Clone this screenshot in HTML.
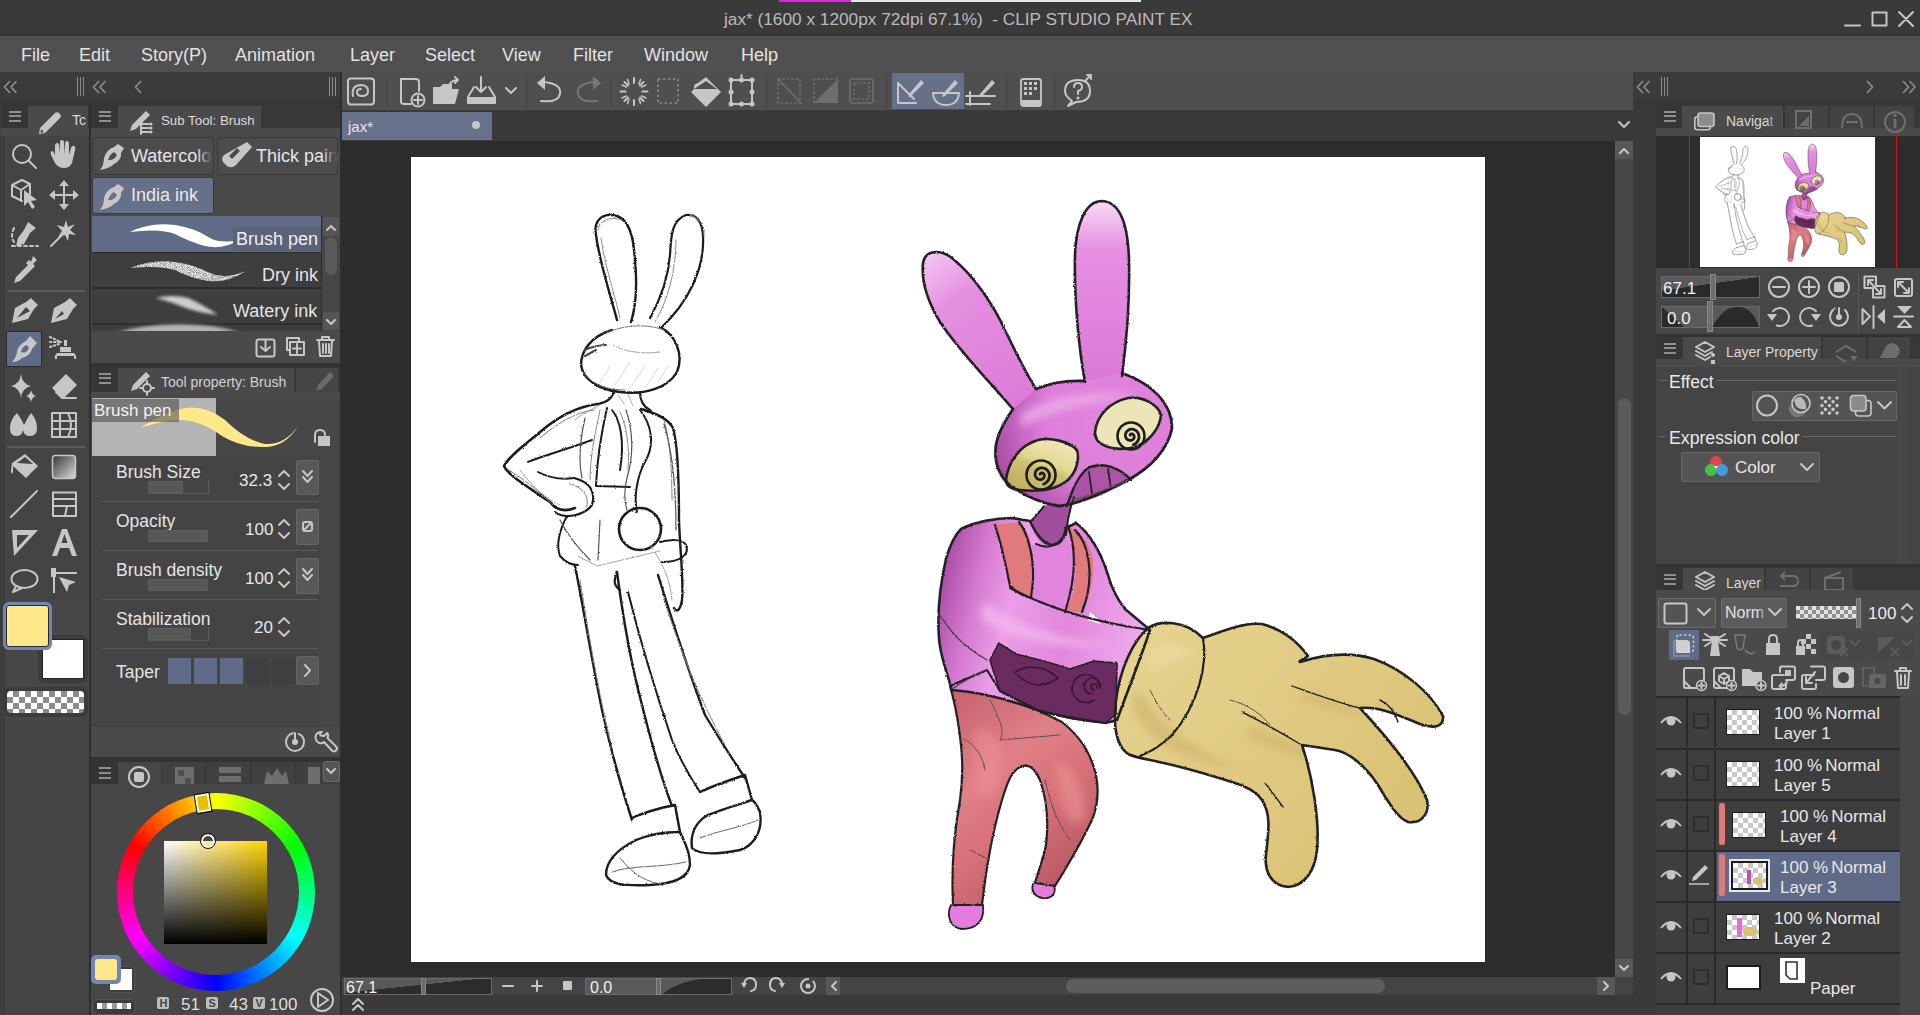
<!DOCTYPE html>
<html><head><meta charset="utf-8">
<style>
*{margin:0;padding:0;box-sizing:border-box}
html,body{width:1920px;height:1015px;overflow:hidden;background:#3a3a3a;font-family:"Liberation Sans",sans-serif;color:#dcdcdc}
.a{position:absolute}
.t{position:absolute;white-space:nowrap;line-height:1}
svg{position:absolute;overflow:visible}
.ic{fill:none;stroke:#c6c6c6;stroke-width:2;stroke-linecap:round;stroke-linejoin:round}
.icf{fill:#c6c6c6;stroke:none}
.hb{position:absolute;background:#363636}
.hb i{position:absolute;left:8px;width:12px;height:2px;background:#8e8e8e}
</style></head><body>

<!-- title bar -->
<div class="a" style="left:0;top:0;width:1920px;height:36px;background:#3a3a3a"></div>
<div class="a" style="left:779px;top:0;width:72px;height:2px;background:#d62ad6"></div>
<div class="a" style="left:851px;top:0;width:290px;height:2px;background:#e8e8e8"></div>
<div class="t" id="title" style="left:724px;top:11px;font-size:17.24px;color:#bababa">jax* (1600 x 1200px 72dpi 67.1%)&nbsp; - CLIP STUDIO PAINT EX</div>
<svg style="left:0;top:0" width="1920" height="36">
<path class="ic" stroke-width="1.6" d="M1845,25.5 H1860 M1872.5,12.5 H1886.5 V25.5 H1872.5 Z M1899,12 L1913,26 M1913,12 L1899,26"/>
</svg>
<div class="a" style="left:0;top:34px;width:1920px;height:2px;background:#353535"></div>
<!-- menu -->
<div class="a" style="left:0;top:36px;width:1920px;height:36px;background:#505050"></div>
<div id="menu">
<div class="t" style="left:21px;top:46px;font-size:18px;color:#e2e2e2">File</div>
<div class="t" style="left:79px;top:46px;font-size:18px;color:#e2e2e2">Edit</div>
<div class="t" style="left:141px;top:46px;font-size:18px;color:#e2e2e2">Story(P)</div>
<div class="t" style="left:235px;top:46px;font-size:18px;color:#e2e2e2">Animation</div>
<div class="t" style="left:350px;top:46px;font-size:18px;color:#e2e2e2">Layer</div>
<div class="t" style="left:425px;top:46px;font-size:18px;color:#e2e2e2">Select</div>
<div class="t" style="left:502px;top:46px;font-size:18px;color:#e2e2e2">View</div>
<div class="t" style="left:573px;top:46px;font-size:18px;color:#e2e2e2">Filter</div>
<div class="t" style="left:644px;top:46px;font-size:18px;color:#e2e2e2">Window</div>
<div class="t" style="left:741px;top:46px;font-size:18px;color:#e2e2e2">Help</div>
</div>
<!-- row under menu -->
<div class="a" style="left:0;top:72px;width:1920px;height:31px;background:#3b3b3b"></div>
<div class="a" style="left:0;top:100px;width:342px;height:4px;background:#363636"></div>
<div class="a" style="left:1633px;top:100px;width:287px;height:4px;background:#363636"></div>
<div class="a" style="left:342px;top:72px;width:1291px;height:38px;background:#4f4f4f"></div>

<!-- ===== LEFT: top row icons ===== -->
<svg style="left:0;top:72px" width="342" height="31">
<path fill="none" stroke="#8e8e8e" stroke-width="1.6" d="M10,9 L4.5,15 L10,21 M16.5,9 L11,15 L16.5,21 M99,9 L93.5,15 L99,21 M105.5,9 L100,15 L105.5,21 M141,9 L135.5,15 L141,21"/>
<path fill="none" stroke="#8a8a8a" stroke-width="1" d="M77.5,5 V24 M80.5,5 V24 M83.5,5 V24 M329.5,5 V24 M332.5,5 V24 M335.5,5 V24"/>
</svg>
<!-- ===== TOOL PANEL ===== -->
<div class="a" style="left:0;top:104px;width:89px;height:911px;background:#444"></div>
<div class="a" style="left:0;top:104px;width:89px;height:24px;background:#383838"></div>
<div class="hb" style="left:1px;top:104px;width:27px;height:24px"><i style="top:7px"></i><i style="top:11px"></i><i style="top:16px"></i></div>
<div class="a" style="left:28px;top:106px;width:60px;height:30px;background:#4a4a4a"></div>
<div class="a" style="left:1px;top:128px;width:88px;height:8px;background:#4a4a4a"></div>
<div class="a" style="left:89px;top:104px;width:2px;height:911px;background:#2f2f2f"></div>
<div class="a" style="left:0;top:136px;width:5px;height:879px;background:#3e3e3e"></div>
<svg style="left:0;top:0" width="90" height="1015">
 <path class="icf" d="M55,113 Q58,111 60,114 Q62,117 59,119 L45,133 L39,134 L40,128 Z"/>
 <path fill="#4a4a4a" d="M41,129 L44,132 L40.5,133 Z"/>
</svg>
<div class="t" style="left:72px;top:113px;font-size:14px;color:#d8d8d8">Tc</div>
<div class="a" style="left:7px;top:290px;width:78px;height:2px;background:#5e5e5e"></div>
<div class="a" style="left:7px;top:446px;width:78px;height:2px;background:#5e5e5e"></div>
<div class="a" style="left:6px;top:331px;width:36px;height:36px;background:#5f6b87;border:1px solid #2c2c2c"></div>
<svg style="left:0;top:0" width="90" height="1015">
 <!-- magnifier -->
 <circle class="ic" cx="22" cy="154" r="9"/><path class="ic" stroke-width="2.6" d="M29,161 L36,168"/>
 <!-- hand -->
 <path class="icf" d="M55,156 L55,146 Q55,143 57,143 Q59,143 59,146 L59,154 L60,143 Q60,140 62,140 Q64,140 64,143 L64,154 L65,144 Q65,141 67,141 Q69,141 69,144 L69,155 L71,148 Q72,145 74,146 Q76,147 75,150 L72,163 Q70,168 64,168 Q58,168 55,163 L51,155 Q50,152 52,151 Q54,151 55,156 Z"/>
 <!-- object -->
 <path class="ic" stroke-width="1.6" d="M12,185 L22,180 L30,184 L30,194 M12,185 L12,196 L22,201 M12,185 L21,190 L30,184 M21,190 L21,201"/>
 <path class="icf" d="M24,190 L24,206 L28,202 L32,209 L35,207 L31,201 L37,200 Z"/>
 <!-- move -->
 <path class="ic" stroke-width="1.8" d="M64,182 V208 M51,195 H77"/>
 <path class="icf" d="M64,180 L59,186 H69 Z M64,210 L59,204 H69 Z M49,195 L55,190 V200 Z M79,195 L73,190 V200 Z"/>
 <!-- selection pen -->
 <path class="icf" d="M28,222 L36,228 L30,233 L24,244 L16,246 L18,238 L24,230 Z"/>
 <path class="ic" stroke-width="1.6" stroke-dasharray="3,3" d="M14,228 Q10,236 14,242 M12,246 H38"/>
 <!-- magic wand -->
 <path class="icf" d="M66,220 L68,227 L75,224 L70,230 L76,235 L69,234 L68,241 L65,235 L58,237 L62,231 L57,225 L64,227 Z"/>
 <path class="ic" stroke-width="1.6" d="M62,235 L51,246"/>
 <!-- eyedropper -->
 <path class="icf" d="M33,256 L37,260 L33,264 L35,266 L32,269 L20,281 L14,283 L16,277 L28,265 L26,263 L29,260 L31,262 Z"/>
 <!-- pen nib -->
 <path class="icf" d="M31,298 L38,305 L34,309 L28,319 L12,323 L15,308 L26,302 Z"/>
 <path fill="#444" d="M17,318 L26,307 L30,311 Z"/>
 <!-- pencil marker -->
 <path class="icf" d="M70,298 L77,305 L73,309 L67,319 L51,323 L54,308 L65,302 Z"/>
 <path fill="#444" d="M55,319 L62,311 L64,314 Z"/>
 <!-- brush (selected) -->
 <path class="icf" d="M30,336 L37,343 L32,349 Q30,356 22,358 Q18,362 12,362 Q16,358 17,352 Q18,345 26,341 Z"/>
 <path fill="#5f6b87" d="M21,352 Q22,346 27,345 L29,348 Q26,354 21,352 Z"/>
 <!-- airbrush -->
 <path class="icf" d="M55,359 H76 Q77,356 74,353 H57 Q54,356 55,359 Z M60,352 H71 V347 H60 Z M64,346 H67 V340 H64 Z"/>
 <rect x="57" y="356" width="17" height="5" fill="#444"/>
 <path class="ic" stroke-width="1.6" stroke-dasharray="1.5,2.5" d="M50,337 L61,342 M50,342 H60 M50,347 L59,344"/>
 <!-- decoration sparkle -->
 <path class="icf" d="M21,374 Q22,384 31,386 Q22,388 21,398 Q20,388 11,386 Q20,384 21,374 Z M31,390 Q32,395 36,396 Q32,397 31,402 Q30,397 26,396 Q30,395 31,390 Z"/>
 <!-- eraser -->
 <path class="icf" d="M66,374 L77,385 L63,399 L52,388 Z"/>
 <path class="ic" stroke-width="1.6" d="M56,392 L62,398 H76"/>
 <!-- blend -->
 <path class="icf" d="M17,413 Q22,420 24,425 Q28,417 31,413 Q37,420 37,428 Q37,436 30,436 Q24,436 23,430 Q22,436 16,436 Q10,436 10,428 Q10,420 17,413 Z"/>
 <!-- perspective grid -->
 <path class="ic" stroke-width="1.6" d="M52,413 H76 V437 H52 Z M52,421 H76 M52,429 H76 M60,413 V437 M68,413 Q74,425 68,437"/>
 <!-- fill -->
 <path class="icf" d="M25,454 L38,466 L26,478 L13,466 L13,472 Q11,476 11,470 L12,463 Z"/>
 <path fill="#444" d="M17,463 L25,457 L33,464 Z"/>
 <!-- gradient -->
 <defs><linearGradient id="tg" x1="0" y1="0" x2="1" y2="1"><stop offset="0" stop-color="#333"/><stop offset="1" stop-color="#ddd"/></linearGradient></defs>
 <rect x="52.5" y="455.5" width="23" height="23" rx="3" fill="url(#tg)" stroke="#c6c6c6" stroke-width="1.5"/>
 <!-- line -->
 <path class="ic" stroke-width="1.6" d="M11,517 L37,491"/>
 <!-- frame -->
 <path class="ic" stroke-width="1.6" d="M53,492.5 H76 V516 H53 Z M53,499 H76 M53,506 H76 M67,506 L65,516"/>
 <!-- ruler -->
 <path class="icf" d="M12,530 H38 L14,556 Z"/>
 <path fill="#444" d="M17,535 H29 L17,548 Z"/>
 <!-- A -->
 <path class="icf" d="M62,529 H67 L77,556 H72 L69,548 H60 L57,556 H52 Z M61.5,543 H67.5 L64.5,534 Z"/>
 <!-- bubble -->
 <ellipse class="ic" stroke-width="1.6" cx="24.5" cy="579" rx="13" ry="9"/>
 <path class="ic" stroke-width="1.6" d="M16,586 L13,592 L22,588"/>
 <!-- correction -->
 <path class="icf" d="M51,568 H56 V572 H77 V574 H56 V577 H55 V593 H53 V577 H51 Z M59,577 L76,582 L69,585 L67,592 Z"/>
</svg>
<!-- color swatches -->
<div class="a" style="left:6px;top:600px;width:83px;height:120px;background:#474747"></div>
<div class="a" style="left:38px;top:635px;width:50px;height:48px;border-radius:6px;background:#3c3c3c"></div>
<div class="a" style="left:42px;top:639px;width:42px;height:40px;background:#fff;border:1px solid #222"></div>
<div class="a" style="left:3px;top:602px;width:49px;height:48px;border-radius:6px;background:#6f86b8"></div>
<div class="a" style="left:6px;top:605px;width:43px;height:42px;border-radius:3px;background:#ffe88a;border:1px solid #2a2a2a"></div>
<div class="a" style="left:3px;top:687px;width:85px;height:30px;border-radius:6px;background:#3c3c3c"></div>
<div class="a" style="left:7px;top:691px;width:77px;height:22px;border-radius:4px;background-color:#fff;background-image:linear-gradient(45deg,#8c8c8c 25%,transparent 25%,transparent 75%,#8c8c8c 75%),linear-gradient(45deg,#8c8c8c 25%,transparent 25%,transparent 75%,#8c8c8c 75%);background-size:12px 12px;background-position:0 0,6px 6px"></div>

<!-- ===== SUB TOOL PANEL ===== -->
<div class="a" style="left:91px;top:104px;width:249px;height:654px;background:#474747"></div>
<div class="a" style="left:91px;top:104px;width:249px;height:24px;background:#383838"></div>
<div class="hb" style="left:91px;top:104px;width:27px;height:24px"><i style="top:7px"></i><i style="top:11px"></i><i style="top:16px"></i></div>
<div class="a" style="left:118px;top:106px;width:143px;height:30px;background:#4a4a4a"></div>
<div class="a" style="left:91px;top:128px;width:249px;height:8px;background:#4a4a4a"></div>
<svg style="left:0;top:0" width="342" height="1015">
 <path class="icf" d="M146,111 L150,115 L136,129 L130,131 L132,125 Z"/>
 <path class="ic" stroke-width="1.5" d="M141,124 H149 M141,128 H149 M141,132 H149 M141,122 V134"/>
 <circle class="icf" cx="151" cy="124" r="1.5"/><circle class="icf" cx="151" cy="128" r="1.5"/><circle class="icf" cx="151" cy="132" r="1.5"/>
</svg>
<div class="t" style="left:161px;top:114px;font-size:13.3px;color:#dcdcdc">Sub Tool: Brush</div>
<div class="a" style="left:91px;top:136px;width:249px;height:80px;background:#4a4a4a"></div>
<div class="a" style="left:92px;top:137px;width:122px;height:38px;background:#4c4c4c;border:1px solid #3a3a3a;border-radius:3px"></div>
<div class="a" style="left:217px;top:137px;width:121px;height:38px;background:#4c4c4c;border:1px solid #3a3a3a;border-radius:3px"></div>
<div class="a" style="left:92px;top:177px;width:122px;height:37px;background:#667089;border:1px solid #3a3a3a;border-radius:3px"></div>
<svg style="left:0;top:0" width="342" height="1015">
 <path class="icf" d="M118,144 L124,148 L121,153 Q122,160 114,164 Q110,168 100,170 Q104,165 104,158 Q106,150 114,147 Z"/>
 <path fill="#4c4c4c" d="M108,160 Q110,154 114,152 L117,155 Q114,161 108,160 Z"/>
 <path class="icf" d="M247,142 L252,147 L236,165 Q232,169 227,166 L223,162 Q221,158 224,155 Z"/>
 <path fill="#4c4c4c" d="M229,156 L237,148 L240,151 L232,159 Z"/>
 <path class="icf" d="M118,184 L124,188 L121,193 Q122,200 114,204 Q110,208 100,210 Q104,205 104,198 Q106,190 114,187 Z"/>
 <path fill="#667089" d="M108,200 Q110,194 114,192 L117,195 Q114,201 108,200 Z"/>
</svg>
<div class="t" style="left:131px;top:147px;font-size:18px;color:#e4e4e4">Watercolo</div>
<div class="a" style="left:196px;top:140px;width:17px;height:32px;background:linear-gradient(90deg,rgba(76,76,76,0),#4c4c4c)"></div>
<div class="t" style="left:256px;top:147px;font-size:18px;color:#e4e4e4">Thick pain</div>
<div class="a" style="left:322px;top:140px;width:15px;height:32px;background:linear-gradient(90deg,rgba(76,76,76,0),#4c4c4c)"></div>
<div class="t" style="left:131px;top:186px;font-size:18px;color:#e8e8e8">India ink</div>
<!-- brush list -->
<div class="a" style="left:92px;top:216px;width:230px;height:115px;background:#2e2e2e"></div>
<div class="a" style="left:92px;top:216px;width:229px;height:36px;background:#5f6b87"></div>
<div class="a" style="left:92px;top:253px;width:229px;height:34px;background:#3e3e3e"></div>
<div class="a" style="left:92px;top:289px;width:229px;height:34px;background:#3e3e3e"></div>
<div class="a" style="left:92px;top:325px;width:229px;height:6px;background:#3e3e3e"></div>
<svg style="left:0;top:0" width="342" height="1015">
 <path fill="#fff" d="M130,232 Q150,222 175,225 Q195,228 210,238 Q220,244 240,240 Q222,250 205,246 Q190,242 175,234 Q160,228 130,232 Z"/>
 <defs><filter id="bl2" x="-30%" y="-100%" width="160%" height="300%"><feGaussianBlur stdDeviation="1.6"/></filter>
 <filter id="speck" x="-10%" y="-50%" width="120%" height="200%"><feTurbulence type="fractalNoise" baseFrequency="1.2" numOctaves="1" seed="7" result="n"/><feColorMatrix in="n" type="matrix" values="0 0 0 0 0  0 0 0 0 0  0 0 0 0 0  0 0 0 -1.6 1.55" result="m"/><feComposite in="SourceGraphic" in2="m" operator="in"/></filter></defs>
 <path fill="#f2f2f2" filter="url(#speck)" d="M130,268 Q152,259 175,262 Q195,265 210,273 Q225,280 246,271 Q228,283 208,281 Q190,278 175,270 Q158,265 130,268 Z"/>
 <path fill="#dddddd" opacity="0.9" filter="url(#bl2)" d="M156,298 Q172,294 188,298 Q202,304 218,315 Q200,313 186,308 Q172,302 156,298 Z"/>
 <path fill="#d0d0d0" opacity="0.8" filter="url(#bl2)" d="M115,333 Q150,322 200,325 Q225,327 240,333 Z"/>
</svg>
<div class="a" style="left:233px;top:227px;width:88px;height:24px;background:#5a6378"></div>
<div class="t" style="left:236px;top:230px;font-size:18px;color:#f0f0f0">Brush pen</div>
<div class="t" style="left:262px;top:266px;font-size:18px;color:#e4e4e4">Dry ink</div>
<div class="t" style="left:233px;top:302px;font-size:18px;color:#e4e4e4">Watery ink</div>
<!-- list scrollbar -->
<div class="a" style="left:322px;top:216px;width:18px;height:115px;background:#474747"></div>
<div class="a" style="left:323px;top:217px;width:16px;height:19px;background:#555;border-radius:2px"></div>
<div class="a" style="left:325px;top:237px;width:12px;height:38px;background:#5a5a5a;border-radius:6px"></div>
<div class="a" style="left:323px;top:312px;width:16px;height:18px;background:#555;border-radius:2px"></div>
<svg style="left:0;top:0" width="342" height="1015">
 <path class="ic" stroke-width="1.4" d="M327,230 L331,226 L335,230 M327,320 L331,324 L335,320"/>
</svg>
<!-- sub tool bottom bar -->
<div class="a" style="left:91px;top:331px;width:249px;height:32px;background:#4a4a4a"></div>
<svg style="left:0;top:0" width="342" height="1015">
 <rect class="ic" stroke-width="1.5" x="256.5" y="339.5" width="18" height="17" rx="2"/><path class="ic" stroke-width="1.5" d="M265.5,340 V351 M261,347 L265.5,351 L270,347"/>
 <path class="ic" stroke-width="1.5" d="M287,338 H299 V341 M287,338 V350 H290 M290,342 H304 V355 H290 Z M297,344 V353 M293,348.5 H301"/>
 <path class="ic" stroke-width="1.5" d="M317,340 H334 M322,340 V337 H329 V340 M319,341 L320,356 H331 L332,341 M323,344 V353 M326,344 V353 M329,344 V353"/>
</svg>
<!-- ===== TOOL PROPERTY ===== -->
<div class="a" style="left:91px;top:363px;width:249px;height:4px;background:#333"></div>
<div class="a" style="left:91px;top:367px;width:249px;height:25px;background:#383838"></div>
<div class="hb" style="left:91px;top:367px;width:27px;height:22px"><i style="top:6px"></i><i style="top:10px"></i><i style="top:15px"></i></div>
<div class="a" style="left:118px;top:368px;width:176px;height:30px;background:#4a4a4a"></div>
<div class="a" style="left:296px;top:368px;width:42px;height:24px;background:#454545"></div>
<div class="a" style="left:91px;top:392px;width:249px;height:6px;background:#4a4a4a"></div>
<svg style="left:0;top:0" width="342" height="1015">
 <path class="icf" d="M146,372 L150,376 L137,389 L131,391 L133,385 Z"/>
 <circle class="ic" stroke-width="1.8" cx="147" cy="388" r="4"/>
 <path class="ic" stroke-width="1.5" d="M147,381 V383 M147,393 V395 M140,388 H142 M152,388 H154"/>
 <path fill="#6a6a6a" d="M330,372 L334,376 L322,389 L316,391 L318,385 Z"/>
</svg>
<div class="t" style="left:161px;top:375px;font-size:14px;color:#d2d2d2">Tool property: Brush</div>
<!-- preview -->
<div class="a" style="left:92px;top:398px;width:248px;height:58px;background:#474747"></div>
<div class="a" style="left:92px;top:398px;width:124px;height:58px;background:#b4b4b4"></div>
<svg style="left:0;top:0" width="342" height="1015">
 <path fill="#ffe88a" d="M140,428 Q165,412 185,408 Q205,405 225,420 Q245,440 265,444 Q285,445 298,426 Q285,448 262,447 Q240,447 222,436 Q200,420 180,420 Q165,420 140,428 Z"/>
 <path class="ic" stroke-width="1.8" d="M315,442 V435 Q315,430 320,430 Q325,430 325,435"/>
 <rect x="318" y="436" width="12" height="10" class="icf"/>
</svg>
<div class="a" style="left:92px;top:399px;width:87px;height:23px;background:rgba(70,70,70,0.55)"></div>
<div class="t" style="left:94px;top:402px;font-size:17px;color:#f2f2f2">Brush pen</div>
<!-- property rows -->
<div class="a" style="left:91px;top:456px;width:249px;height:302px;background:#444"></div>
<div class="a" style="left:320px;top:456px;width:20px;height:270px;background:#474747"></div>
<div class="a" style="left:102px;top:501px;width:216px;height:1px;background:#5a5a5a"></div>
<div class="a" style="left:102px;top:550px;width:216px;height:1px;background:#5a5a5a"></div>
<div class="a" style="left:102px;top:599px;width:216px;height:1px;background:#5a5a5a"></div>
<div class="a" style="left:102px;top:648px;width:216px;height:1px;background:#5a5a5a"></div>
<div class="t" style="left:116px;top:464px;font-size:17.5px;color:#e4e4e4">Brush Size</div>
<div class="t" style="left:116px;top:513px;font-size:17.5px;color:#e4e4e4">Opacity</div>
<div class="t" style="left:116px;top:562px;font-size:17.5px;color:#e4e4e4">Brush density</div>
<div class="t" style="left:116px;top:611px;font-size:17.5px;color:#e4e4e4">Stabilization</div>
<div class="t" style="left:116px;top:664px;font-size:17.5px;color:#e4e4e4">Taper</div>
<div class="t" style="left:239px;top:472px;font-size:17px;color:#e8e8e8">32.3</div>
<div class="t" style="left:245px;top:521px;font-size:17px;color:#e8e8e8">100</div>
<div class="t" style="left:245px;top:570px;font-size:17px;color:#e8e8e8">100</div>
<div class="t" style="left:254px;top:619px;font-size:17px;color:#e8e8e8">20</div>
<!-- sliders -->
<div class="a" style="left:148px;top:480px;width:61px;height:14px;border-bottom:1px solid #5a5a5a;border-right:1px solid #5a5a5a"></div>
<div class="a" style="left:148px;top:481px;width:35px;height:12px;background:#575757;border:1px solid #5e5e5e"></div>
<div class="a" style="left:148px;top:530px;width:60px;height:12px;background:#575757;border:1px solid #5e5e5e"></div>
<div class="a" style="left:148px;top:579px;width:60px;height:12px;background:#575757;border:1px solid #5e5e5e"></div>
<div class="a" style="left:148px;top:627px;width:61px;height:14px;border-bottom:1px solid #5a5a5a;border-right:1px solid #5a5a5a"></div>
<div class="a" style="left:148px;top:628px;width:43px;height:12px;background:#575757;border:1px solid #5e5e5e"></div>
<!-- buttons -->
<div class="a" style="left:296px;top:460px;width:23px;height:35px;background:#585858;border:1px solid #666;border-radius:2px"></div>
<div class="a" style="left:296px;top:509px;width:23px;height:36px;background:#585858;border:1px solid #666;border-radius:2px"></div>
<div class="a" style="left:296px;top:558px;width:23px;height:36px;background:#585858;border:1px solid #666;border-radius:2px"></div>
<div class="a" style="left:296px;top:656px;width:23px;height:29px;background:#585858;border:1px solid #666;border-radius:2px"></div>
<svg style="left:0;top:0" width="342" height="1015">
 <path class="ic" stroke-width="1.4" d="M279,476 L284,471 L289,476 M279,484 L284,489 L289,484 M279,525 L284,520 L289,525 M279,533 L284,538 L289,533 M279,574 L284,569 L289,574 M279,582 L284,587 L289,582 M279,623 L284,618 L289,623 M279,631 L284,636 L289,631"/>
 <path class="ic" stroke-width="1.4" d="M303,471 L307.5,476 L312,471 M303,477 L307.5,482 L312,477 M303,569 L307.5,574 L312,569 M303,575 L307.5,580 L312,575"/>
 <rect class="ic" stroke-width="1.4" x="303" y="522" width="9" height="9" rx="2"/><path class="ic" stroke-width="1.2" d="M304,530 L311,523"/>
 <path class="ic" stroke-width="1.6" d="M305,665 L310,670.5 L305,676"/>
</svg>
<!-- taper -->
<div class="a" style="left:168px;top:658px;width:23px;height:26px;background:#5f6b87"></div>
<div class="a" style="left:194px;top:658px;width:23px;height:26px;background:#5f6b87"></div>
<div class="a" style="left:220px;top:658px;width:23px;height:26px;background:#5f6b87"></div>
<div class="a" style="left:246px;top:658px;width:23px;height:26px;background:#3f3f3f"></div>
<div class="a" style="left:272px;top:658px;width:23px;height:26px;background:#3f3f3f"></div>
<!-- tool property bottom bar -->
<div class="a" style="left:91px;top:727px;width:249px;height:30px;background:#4a4a4a"></div>
<svg style="left:0;top:0" width="342" height="1015">
 <circle class="ic" stroke-width="1.5" cx="295" cy="742" r="9" stroke-dasharray="40,6"/>
 <circle class="icf" cx="295" cy="742" r="3"/><path class="ic" stroke-width="1.5" d="M295,742 V733"/>
 <path class="ic" stroke-width="1.6" d="M322,732 Q316,732 315.5,737 Q315.5,741 319,743 Q322,744 324,742 L332,750.5 Q334,752.5 336,750.5 Q338,748.5 336,746.5 L327.5,738 Q329,735 327,733 L324,736 L320.5,735.5 L320,732.5 Z"/>
</svg>
<!-- ===== COLOR WHEEL PANEL ===== -->
<div class="a" style="left:91px;top:757px;width:249px;height:5px;background:#333"></div>
<div class="a" style="left:91px;top:762px;width:249px;height:253px;background:#474747"></div>
<div class="a" style="left:91px;top:762px;width:249px;height:22px;background:#3c3c3c"></div>
<div class="hb" style="left:91px;top:762px;width:27px;height:22px;background:#353535"><i style="top:5px"></i><i style="top:10px"></i><i style="top:15px"></i></div>
<div class="a" style="left:118px;top:762px;width:43px;height:22px;background:#474747"></div>
<div class="a" style="left:162px;top:762px;width:44px;height:22px;background:#404040;border-right:1px solid #363636"></div>
<div class="a" style="left:207px;top:762px;width:44px;height:22px;background:#404040;border-right:1px solid #363636"></div>
<div class="a" style="left:252px;top:762px;width:44px;height:22px;background:#404040;border-right:1px solid #363636"></div>
<div class="a" style="left:297px;top:762px;width:43px;height:22px;background:#404040"></div>
<div class="a" style="left:323px;top:761px;width:17px;height:21px;background:#555;border:1px solid #6a6a6a;border-radius:2px"></div>
<svg style="left:0;top:0" width="342" height="1015">
 <circle class="ic" stroke-width="1.6" cx="139" cy="777" r="10"/><rect class="icf" x="134" y="772" width="10" height="10" rx="2"/>
 <path fill="#6e6e6e" d="M175,767 H194 V784 H175 Z"/><path fill="#505050" d="M178,770 H184 V776 H178 Z M185,778 H191 V784 H185 Z"/>
 <path fill="#6e6e6e" d="M219,767 H241 V773 H219 Z M219,776 H241 V782 H219 Z"/>
 <path fill="#6e6e6e" d="M264,784 L267,771 L272,776 L277,768 L282,776 L286,771 L289,784 Z"/>
 <path fill="#6e6e6e" d="M308,767 H320 V784 H308 Z"/>
 <path class="ic" stroke-width="1.4" d="M327,769 L331,773 L335,769"/>
</svg>
<!-- wheel -->
<div class="a" style="left:117px;top:793px;width:198px;height:198px;border-radius:50%;background:conic-gradient(from 0deg,hsl(60,100%,50%),hsl(120,100%,50%) 60deg,hsl(180,100%,50%) 120deg,hsl(240,100%,50%) 180deg,hsl(300,100%,50%) 240deg,hsl(360,100%,50%) 300deg,hsl(420,100%,50%) 360deg)"></div>
<div class="a" style="left:133px;top:809px;width:166px;height:166px;border-radius:50%;background:#474747"></div>
<div class="a" style="left:164px;top:841px;width:103px;height:103px;background:linear-gradient(to bottom,rgba(0,0,0,0),#000),linear-gradient(to right,#fff,#ffd400)"></div>
<div class="a" style="left:196px;top:794px;width:14px;height:18px;background:#e8c000;border:2px solid #fff;outline:1px solid #111;transform:rotate(-9deg)"></div>
<div class="a" style="left:201px;top:834px;width:14px;height:14px;border-radius:50%;border:2px solid #fff;outline:1px solid #111"></div>
<!-- mini swatches -->
<div class="a" style="left:107px;top:966px;width:28px;height:27px;border-radius:5px;background:#3c3c3c;border:1px solid #555"></div>
<div class="a" style="left:110px;top:969px;width:22px;height:21px;background:#fff"></div>
<div class="a" style="left:91px;top:955px;width:30px;height:29px;border-radius:5px;background:#6f86b8"></div>
<div class="a" style="left:95px;top:959px;width:22px;height:21px;border-radius:3px;background:#ffe88a"></div>
<div class="a" style="left:92px;top:999px;width:44px;height:16px;border-radius:6px;background:#3c3c3c;border:1px solid #555"></div>
<div class="a" style="left:97px;top:1003px;width:34px;height:6px;background:repeating-linear-gradient(90deg,#fff 0 5px,#999 5px 10px)"></div>
<div class="t" style="left:181px;top:996px;font-size:17px;color:#dedede">51</div>
<div class="t" style="left:229px;top:996px;font-size:17px;color:#dedede">43</div>
<div class="t" style="left:269px;top:996px;font-size:17px;color:#dedede">100</div>
<div class="a" style="left:157px;top:997px;width:12px;height:12px;border-radius:2px;background:#bdbdbd"></div>
<div class="a" style="left:206px;top:997px;width:12px;height:12px;border-radius:2px;background:#bdbdbd"></div>
<div class="a" style="left:253px;top:997px;width:12px;height:12px;border-radius:2px;background:#bdbdbd"></div>
<div class="t" style="left:159.5px;top:998px;font-size:11px;font-weight:bold;color:#474747">H</div>
<div class="t" style="left:208.5px;top:998px;font-size:11px;font-weight:bold;color:#474747">S</div>
<div class="t" style="left:255.5px;top:998px;font-size:11px;font-weight:bold;color:#474747">V</div>
<svg style="left:0;top:0" width="342" height="1015">
 <circle class="ic" stroke-width="1.6" cx="322" cy="1000" r="11"/><path class="ic" stroke-width="1.6" d="M318,993 L328,1000 L318,1007 Z"/>
</svg>
<div class="a" style="left:340px;top:72px;width:2px;height:943px;background:#2f2f2f"></div>

<!-- ===== CANVAS TOOLBAR ===== -->
<div class="a" style="left:386px;top:76px;width:1px;height:32px;background:#3f3f3f"></div>
<div class="a" style="left:526px;top:76px;width:1px;height:32px;background:#3f3f3f"></div>
<div class="a" style="left:610px;top:76px;width:1px;height:32px;background:#3f3f3f"></div>
<div class="a" style="left:766px;top:76px;width:1px;height:32px;background:#3f3f3f"></div>
<div class="a" style="left:886px;top:76px;width:1px;height:32px;background:#3f3f3f"></div>
<div class="a" style="left:1006px;top:76px;width:1px;height:32px;background:#3f3f3f"></div>
<div class="a" style="left:1054px;top:76px;width:1px;height:32px;background:#3f3f3f"></div>
<div class="a" style="left:892px;top:73px;width:72px;height:36px;background:#667089"></div>
<svg style="left:0;top:0" width="1920" height="120">
 <g class="ic" stroke-width="1.8">
  <rect x="348" y="78.5" width="26" height="26" rx="3"/>
  <path d="M353,96 Q351,86 360,85 Q368,85 368,91 Q368,96 362,96 Q357,96 357,92 Q357,89 361,89"/>
  <path d="M401,79 H416 Q419,79 419,82 V91 M401,79 V102 Q401,104 405,104 H411"/>
  <circle cx="418" cy="100" r="6.5"/><path d="M414,100 H422 M418,96 V104"/>
  <path d="M474,87 L468,97 V103 H495 V97 L489,87"/>
  <path d="M481,77 V92 M476,87 L481,92 L486,87"/>
  <path d="M506,88 L511,93 L516,88"/>
  <path d="M544,82 Q562,84 560,94 Q558,103 541,101"/>
  <path d="M594,82 Q576,84 578,94 Q580,103 597,101" stroke="#777"/>
 </g>
 <path class="icf" d="M433,87 H440 L443,84 H452 V89 H459 L455,104 H433 Z"/>
 <path class="ic" stroke-width="1.6" d="M448,88 Q450,80 458,80 M455,77 L458,80 L455,83"/>
 <path class="icf" d="M468,97 H495 V103 H468 Z"/>
 <path class="icf" d="M537,83 L545,76 V90 Z"/>
 <path fill="#777" d="M601,83 L593,76 V90 Z"/>
 <!-- spinner -->
 <g class="ic" stroke-width="2">
  <path d="M634,78 V83 M634,100 V105 M620.5,91.5 H625.5 M642.5,91.5 H647.5 M624.5,82 L628,85.5 M640,97.5 L643.5,101 M643.5,82 L640,85.5 M628,97.5 L624.5,101"/>
  <path d="M627.5,79.5 L629,84 M639,99 L640.5,103.5 M622,85 L626.5,87 M641.5,96 L646,98 M646,85 L641.5,87 M626.5,96 L622,98 M640.5,79.5 L639,84 M629,99 L627.5,103.5" stroke-width="1.5"/>
 </g>
 <g fill="none" stroke="#8a8a8a" stroke-width="1.6" stroke-dasharray="2.5,2.5">
  <rect x="658" y="79" width="20" height="24"/>
 </g>
 <path class="icf" d="M706,77 L721,92 L706,107 L691,92 L694,89 Q693,84 698,83 Z"/>
 <path fill="#4f4f4f" d="M694,89 L706,81 L717,89 Z"/>
 <g class="ic" stroke-width="1.6"><rect x="731" y="80" width="21" height="24"/></g>
 <g class="icf"><circle cx="731" cy="80" r="2.5"/><circle cx="752" cy="80" r="2.5"/><circle cx="731" cy="104" r="2.5"/><circle cx="752" cy="104" r="2.5"/><circle cx="741.5" cy="104" r="2.5"/><circle cx="731" cy="92" r="2.5"/><circle cx="752" cy="92" r="2.5"/><circle cx="741.5" cy="80" r="2.5"/></g>
 <path class="ic" stroke-width="1.6" d="M741.5,80 V75"/>
 <!-- dim icons -->
 <g fill="none" stroke="#6e6e6e" stroke-width="1.6">
  <path stroke-dasharray="2.5,2" d="M778,79 H800 V103 H778 Z"/>
  <path d="M778,79 L802,104"/>
  <path stroke-dasharray="2.5,2" d="M814,103 V79 L838,79"/>
  <rect x="850" y="79" width="23" height="24" rx="2"/>
  <path stroke-dasharray="2.5,2" d="M854,83 H869 V99 H854 Z"/>
 </g>
 <path fill="#6e6e6e" d="M838,79 V103 H814 Z"/>
 <!-- ruler snap icons -->
 <g class="ic" stroke-width="1.8">
  <path d="M898,83 V103 H916"/><path d="M898,83 L914,99"/>
  <path d="M933,93 H959 Q958,105 946,105 Q934,105 933,93"/>
  <path d="M970,92 V105 M966,96 H995 M966,104 H990"/>
 </g>
 <path class="icf" d="M921,80 L924,83 L911,96 L908,97 L909,94 Z M955,80 L958,83 L945,96 L942,97 L943,94 Z M992,80 L995,83 L982,96 L979,97 L980,94 Z"/>
 <!-- device -->
 <rect x="1021" y="79" width="20" height="27" rx="2.5" fill="none" stroke="#c6c6c6" stroke-width="1.8"/>
 <rect x="1022" y="100" width="18" height="5" fill="#c6c6c6"/>
 <g class="icf"><rect x="1024" y="82" width="3" height="3"/><rect x="1029" y="82" width="3" height="3"/><rect x="1034" y="82" width="3" height="3"/><rect x="1024" y="87" width="3" height="3"/><rect x="1029" y="87" width="3" height="3"/><rect x="1034" y="87" width="3" height="3"/><rect x="1024" y="92" width="3" height="3"/><rect x="1029" y="92" width="3" height="3"/></g>
 <!-- help -->
 <path class="ic" stroke-width="1.8" d="M1072,101 Q1065,96 1065,91 Q1065,80 1078,80 Q1090,80 1090,91 Q1090,102 1076,102 L1068,106 Z"/>
 <path class="ic" stroke-width="1.8" d="M1085,81 L1091,75 M1087,75 H1091 V79"/>
 <path class="ic" stroke-width="2" d="M1074,87 Q1074,83 1078,83 Q1082,83 1082,87 Q1082,90 1078,91 V94"/>
 <circle class="icf" cx="1078" cy="98" r="1.5"/>
</svg>
<!-- ===== CANVAS AREA ===== -->
<div class="a" style="left:342px;top:110px;width:1291px;height:31px;background:#3a3a3a"></div>
<div class="a" style="left:342px;top:112px;width:150px;height:28px;background:#677189"></div>
<div class="t" style="left:348px;top:119px;font-size:15px;color:#e6e6e6">jax*</div>
<div class="a" style="left:472px;top:121px;width:8px;height:8px;border-radius:50%;background:#c8c8c8"></div>
<svg style="left:0;top:0" width="1920" height="200"><path class="ic" stroke-width="1.5" d="M1619,122 L1624,127 L1629,122"/></svg>
<div class="a" style="left:342px;top:141px;width:1273px;height:836px;background:#2c2c2c"></div>
<div class="a" style="left:411px;top:157px;width:1074px;height:805px;background:#fff"></div>
<div class="a" style="left:1615px;top:141px;width:18px;height:836px;background:#474747"></div>
<div class="a" style="left:1615px;top:141px;width:18px;height:18px;background:#585858"></div>
<div class="a" style="left:1615px;top:959px;width:18px;height:18px;background:#585858"></div>
<div class="a" style="left:1618px;top:398px;width:13px;height:317px;border-radius:7px;background:#5a5a5a"></div>
<div class="a" style="left:342px;top:977px;width:1291px;height:18px;background:#444"></div>
<div class="a" style="left:1597px;top:977px;width:18px;height:18px;background:#585858"></div>
<div class="a" style="left:826px;top:977px;width:14px;height:18px;background:#585858"></div>
<div class="a" style="left:1066px;top:979px;width:319px;height:14px;border-radius:7px;background:#5d5d5d"></div>
<div class="a" style="left:342px;top:995px;width:1291px;height:20px;background:#3a3a3a"></div>
<svg style="left:0;top:0" width="1920" height="1015">
 <path class="ic" stroke-width="1.4" d="M1620,153 L1624,149 L1628,153 M1620,966 L1624,970 L1628,966 M1604,982 L1608,986 L1604,990 M836,982 L832,986 L836,990"/>
 <path class="ic" stroke-width="1.5" d="M353,1004 L358,999 L363,1004 M353,1010 L358,1005 L363,1010"/>
</svg>
<!-- zoom controls -->
<div class="a" style="left:344px;top:978px;width:148px;height:17px;background:linear-gradient(174deg,#5a5a5a 0,#5a5a5a 45%,#2c2c2c 46%);border:1px solid #6a6a6a"></div>
<div class="a" style="left:421px;top:978px;width:5px;height:17px;background:#6a6a6a;border:1px solid #888"></div>
<div class="t" style="left:346px;top:980px;font-size:16px;color:#f0f0f0">67.1</div>
<div class="a" style="left:585px;top:978px;width:147px;height:17px;background:#5a5a5a;border:1px solid #6a6a6a;overflow:hidden"><div style="position:absolute;left:72px;top:-2px;width:150px;height:60px;border-radius:45%;background:#2c2c2c"></div></div>
<div class="a" style="left:656px;top:978px;width:5px;height:17px;background:#6a6a6a;border:1px solid #888"></div>
<div class="t" style="left:590px;top:980px;font-size:16px;color:#f0f0f0">0.0</div>
<svg style="left:0;top:0" width="1920" height="1015">
 <g class="ic" stroke-width="1.6">
 <path d="M503,986 H513 M532,986 H542 M537,981 V991"/>
 <path d="M744,984 Q745,978 750,978 Q756,978 756,985 Q756,990 751,991"/>
 <path d="M782,984 Q781,978 776,978 Q770,978 770,985 Q770,990 775,991"/>
 <circle cx="808" cy="986" r="7" stroke-dasharray="33,6"/>
 </g>
 <rect class="icf" x="563" y="981" width="9" height="9" rx="1"/>
 <path class="icf" d="M741,983 L747,983 L744,988 Z M779,983 L785,983 L782,988 Z"/>
 <circle class="icf" cx="808" cy="986" r="2.5"/>
</svg>

<svg style="left:0;top:0" width="1920" height="1015" viewBox="0 0 1920 1015">
<defs>
<filter id="rough" x="-2%" y="-2%" width="104%" height="104%"><feTurbulence type="fractalNoise" baseFrequency="0.9" numOctaves="2" seed="4"/><feDisplacementMap in="SourceGraphic" scale="2.2" xChannelSelector="R" yChannelSelector="G"/></filter>
<filter id="blur3" x="-20%" y="-20%" width="140%" height="140%"><feGaussianBlur stdDeviation="4"/></filter>
<filter id="blur6" x="-30%" y="-30%" width="160%" height="160%"><feGaussianBlur stdDeviation="7"/></filter>
<linearGradient id="earL" gradientUnits="userSpaceOnUse" x1="925" y1="255" x2="1030" y2="400"><stop offset="0" stop-color="#f4c8f2"/><stop offset="0.3" stop-color="#e490e0"/><stop offset="1" stop-color="#dc7ad8"/></linearGradient>
<linearGradient id="earR" gradientUnits="userSpaceOnUse" x1="1100" y1="205" x2="1100" y2="380"><stop offset="0" stop-color="#f8d4f5"/><stop offset="0.25" stop-color="#e590e2"/><stop offset="1" stop-color="#dc78d8"/></linearGradient>
<radialGradient id="headG" gradientUnits="userSpaceOnUse" cx="1110" cy="420" r="120"><stop offset="0" stop-color="#e286de"/><stop offset="0.55" stop-color="#de7eda"/><stop offset="1" stop-color="#a84ca4"/></radialGradient>
<linearGradient id="bodyG" gradientUnits="userSpaceOnUse" x1="940" y1="600" x2="1150" y2="650"><stop offset="0" stop-color="#b052ac"/><stop offset="0.15" stop-color="#d47ad0"/><stop offset="0.32" stop-color="#ec9ee8"/><stop offset="0.6" stop-color="#e286de"/><stop offset="1" stop-color="#f0b0ec"/></linearGradient>
<linearGradient id="pantsG" gradientUnits="userSpaceOnUse" x1="950" y1="700" x2="1095" y2="880"><stop offset="0" stop-color="#c86470"/><stop offset="0.35" stop-color="#e08088"/><stop offset="0.6" stop-color="#d87078"/><stop offset="1" stop-color="#b0545e"/></linearGradient>
<linearGradient id="gloveG" gradientUnits="userSpaceOnUse" x1="1150" y1="630" x2="1420" y2="850"><stop offset="0" stop-color="#e6d28e"/><stop offset="0.5" stop-color="#e0ca82"/><stop offset="1" stop-color="#d8c070"/></linearGradient>
<linearGradient id="eyeL" gradientUnits="userSpaceOnUse" x1="1050" y1="440" x2="1030" y2="492"><stop offset="0" stop-color="#ede6b0"/><stop offset="0.4" stop-color="#e2d894"/><stop offset="0.55" stop-color="#cdc072"/><stop offset="1" stop-color="#c0b060"/></linearGradient>
<path id="pEarL" d="M1045,425 L1012,408 C990,382 960,352 940,322 C928,302 921,282 923,263 C925,250 940,249 952,258 C972,274 992,302 1005,330 C1017,355 1027,375 1036,389 L1050,410 Z"/>
<path id="pEarR" d="M1085,382 C1079,350 1074,300 1075,255 C1076,225 1085,202 1101,201 C1120,201 1128,225 1129,260 C1130,300 1126,345 1122,376 L1110,400 L1090,400 Z"/>
<path id="pHead" d="M1013,409 C1002,425 995,440 995.5,452 C995,468 1003,480 1011,486 C1022,494 1040,503 1059,506 C1080,504 1105,492 1128,480 C1150,468 1168,450 1172,428 C1172,405 1155,385 1122,373 L1084,381 C1065,380 1048,384 1036,389 Z"/>
<path id="pEyeL" d="M1006,480 C1008,462 1020,445 1038,440 C1052,437 1070,442 1077,450 C1080,460 1076,472 1068,480 C1056,490 1038,492 1020,490 C1010,489 1006,485 1006,480 Z"/>
<path id="pEyeR" d="M1095,432 C1097,415 1110,402 1128,398 C1142,396 1158,404 1161,415 C1160,428 1150,440 1138,446 C1125,451 1108,449 1100,443 C1096,440 1095,436 1095,432 Z"/>
<path id="pBody" d="M961,529 C975,522 995,518 1012,518 L1030,521 C1035,532 1042,544 1053,545 C1060,544 1064,540 1066,528 L1076,523 C1088,532 1100,550 1108,575 C1112,590 1118,600 1125,609 L1150,630 C1140,660 1128,690 1117,720 L1106,723 C1080,720 1050,714 1037,710 C1010,700 980,692 952,690 C946,670 940,655 939,638 C937,610 940,585 946,559 C950,545 955,535 961,529 Z"/>
<path id="pPants" d="M950,686 C954,700 957,715 959,729 C962,750 964,770 960,800 C955,830 951,860 953,905 L982,905 C986,870 993,830 1002,800 C1008,780 1012,770 1022,766 C1030,764 1036,770 1040,780 C1047,800 1049,820 1046,845 C1043,860 1038,872 1035,883 L1055,886 C1065,870 1080,845 1092,820 C1098,805 1099,790 1096,775 C1090,750 1078,735 1062,722 L1037,710 L1000,691 L987,670 Z"/>
<path id="pGlove" d="M1148,628 C1160,620 1185,620 1203,638 C1225,630 1245,622 1262,624 C1285,630 1300,645 1308,656 C1303,660 1298,661 1300,662 C1322,655 1348,651 1374,659 C1404,670 1430,692 1443,716 C1444,727 1434,729 1420,724 C1400,716 1380,706 1360,708 C1385,735 1415,770 1427,800 C1430,815 1420,824 1408,822 C1398,818 1390,805 1378,785 C1365,765 1348,752 1335,750 L1302,745 C1312,775 1320,820 1317,850 C1315,870 1305,886 1288,887 C1272,886 1264,872 1266,855 C1268,835 1272,815 1262,800 C1255,790 1245,786 1235,783 C1210,775 1175,765 1150,760 C1140,758 1132,756 1128,754 C1116,745 1113,725 1116,700 C1120,670 1132,642 1148,628 Z"/>
<path id="pBelt" d="M998.6,643 L990,660 L993,670 L1000,691 L1037,710 L1051,714 L1073,719 L1106,723 L1116,714 L1117,663 L1094,661 L1070,669 L1044,661 L1016,654 Z"/>
<clipPath id="cGlove"><use href="#pGlove"/></clipPath>
<clipPath id="cPants"><use href="#pPants"/></clipPath>
<clipPath id="cHead"><use href="#pHead"/></clipPath>
<clipPath id="cBody"><use href="#pBody"/></clipPath>
</defs>
<g id="drawingG">
<!-- ===== LEFT SKETCH ===== -->
<g fill="none" stroke="#1c1c1c" stroke-linecap="round" stroke-linejoin="round" filter="url(#rough)">
 <!-- ears -->
 <path stroke-width="2.4" d="M617,320 C612,300 600,265 596,235 C593,220 603,214 612,215 C625,216 632,228 634,250 C637,275 638,300 631,322"/>
 <path stroke-width="1" stroke="#8a8a8a" d="M620,318 C616,300 604,262 601,238 M598,230 C600,220 610,216 622,220"/>
 <path stroke-width="2.2" d="M650,318 C660,300 668,280 670,255 C671,235 672,220 686,215 C700,213 704,228 703,245 C702,270 690,300 662,327"/>
 <path stroke-width="1" stroke="#8a8a8a" d="M655,322 C668,300 676,270 676,240 M690,215 C700,218 705,226 704,236"/>
 <!-- head -->
 <path stroke-width="2.4" d="M612,330 C592,336 581,350 581,365 C583,380 600,390 620,392 C645,395 668,388 677,372 C684,355 676,335 660,327"/>
 <path stroke-width="1" stroke="#777" d="M606,333 C626,324 648,324 664,330 M583,372 C590,383 605,390 625,390"/>
 <path stroke-width="2" stroke="#444" d="M584,350 C592,347 600,345 606,345 M585,356 L596,350"/>
 <path stroke-width="0.7" stroke="#c4c4c4" d="M615,385 L630,362 M630,388 L645,366 M645,388 L658,368 M658,382 L668,366 M600,383 L610,366"/>
 <!-- neck -->
 <path stroke-width="2.2" d="M614,390 C613,398 608,402 598,404 M640,392 C640,400 642,406 650,410"/>
 <path stroke-width="0.8" stroke="#999" d="M618,395 L625,405 M628,394 L633,406"/>
 <!-- torso / arm -->
 <path stroke-width="2.6" d="M598,404 C580,406 560,415 540,432 C525,445 510,455 504,466 C508,475 525,485 550,502 C556,510 565,512 575,508"/>
 <path stroke-width="1" stroke="#777" d="M594,410 C576,412 556,424 540,438 M509,470 C525,480 540,492 553,505"/>
 <path stroke-width="1.9" d="M528,462 C545,455 565,450 592,440 M538,472 C550,478 562,480 574,478"/>
 <path stroke-width="2.2" d="M574,478 C590,482 596,492 592,505 C585,515 565,520 555,512"/>
 <path stroke-width="1" stroke="#777" d="M570,484 C585,488 590,498 586,508"/>
 <path stroke-width="2" d="M566,518 C560,530 556,545 560,556 C565,562 572,565 578,565"/>
 <path stroke-width="2" d="M607,408 C602,430 597,460 596,486 L630,487 M612,410 C620,420 625,440 620,470"/>
 <path stroke-width="1" stroke="#888" d="M620,412 C626,425 630,445 628,470 M600,410 C596,430 590,455 590,480"/>
 <path stroke-width="2" d="M640,410 C652,425 655,445 645,462 C636,478 634,500 637,512"/>
 <path stroke-width="2.4" d="M641,409 C655,413 668,418 673,428 C678,445 679,480 679,520 C680,550 684,585 682,600 C680,612 676,612 674,608"/>
 <path stroke-width="1" stroke="#888" d="M664,420 C670,440 672,470 672,500"/>
 <path stroke-width="2" d="M660,542 C670,540 682,538 686,545 C690,555 680,562 662,562"/>
 <circle cx="640" cy="529" r="21" stroke-width="2.6"/>
 <path stroke-width="0.9" stroke="#999" d="M578,556 L597,566 L660,551"/>
 <path stroke-width="1.2" stroke="#555" d="M626,410 C633,430 634,455 627,478 C624,490 624,500 627,510 M585,418 C580,440 578,460 582,478 M664,424 C672,450 676,490 676,530 M560,520 C565,530 575,545 590,560 M600,520 L598,560"/>
 <path stroke-width="0.9" stroke="#999" d="M520,470 C535,490 548,500 560,505 M600,405 C590,410 580,415 575,420 M650,545 C660,560 670,575 672,600 M613,345 C620,350 640,355 660,352"/>
 <!-- legs -->
 <path stroke-width="2.4" d="M575,566 C582,600 590,650 602,710 C612,755 622,790 632,820"/>
 <path stroke-width="1" stroke="#888" d="M580,580 C588,630 598,690 610,740"/>
 <path stroke-width="2.4" d="M617,572 C622,610 630,660 642,705 C652,745 662,780 672,806"/>
 <path stroke-width="2.2" d="M617,572 C614,580 613,585 620,590"/>
 <path stroke-width="2.4" d="M658,575 C672,620 688,670 705,715 C720,740 733,760 745,778"/>
 <path stroke-width="1" stroke="#888" d="M664,600 C680,650 700,700 725,745"/>
 <path stroke-width="2" d="M628,592 C640,640 655,690 672,740 C682,765 692,780 700,792"/>
 <!-- shoes -->
 <path stroke-width="2.4" d="M632,818 C645,812 660,808 675,805 L680,832 C665,832 648,835 636,840"/>
 <path stroke-width="2.4" d="M636,840 C620,848 606,860 606,875 C610,885 625,886 650,885 C670,884 688,880 690,865 C690,848 682,838 680,832"/>
 <path stroke-width="1" stroke="#666" d="M612,872 C630,865 660,868 686,862 M620,858 C630,870 640,880 660,884"/>
 <path stroke-width="2.4" d="M700,792 C715,785 730,780 745,775 L752,800 C740,804 720,810 708,815"/>
 <path stroke-width="2.4" d="M708,815 C695,822 690,835 692,848 C700,856 720,854 740,850 C755,845 763,830 760,812 C757,805 755,802 752,800"/>
 <path stroke-width="1" stroke="#666" d="M700,838 C720,830 740,828 758,820"/>
</g>
<!-- ===== COLORED CHARACTER: fills ===== -->
<g stroke="none">
 <use href="#pEarL" fill="url(#earL)"/>
 <use href="#pEarR" fill="url(#earR)"/>
 <use href="#pPants" fill="url(#pantsG)"/>
 <path fill="#e88c90" opacity="0.7" filter="url(#blur3)" clip-path="url(#cPants)" d="M975,730 C990,725 1010,740 1000,780 C995,800 980,805 975,790 Z M1055,760 C1070,760 1090,790 1085,820 C1075,830 1060,815 1058,790 Z"/>
 <path fill="#e47ce0" d="M951,905 C946,915 950,928 962,929 C975,929 985,922 983,905 Z M1033,884 C1030,893 1038,899 1047,898 C1054,897 1056,891 1054,885 Z"/>
 <use href="#pBody" fill="url(#bodyG)"/>
 <path fill="#e084dc" d="M1032,545 C1045,548 1060,546 1066,535 C1074,555 1076,585 1066,612 L1032,600 Z"/>
 <path fill="#e07a7c" d="M995,525 C1000,540 1005,560 1010,586 C1016,592 1024,596 1031,598 C1034,580 1033,555 1030,540 C1027,532 1023,526 1019,522 Z"/>
 <path fill="#e07a7c" d="M1068,526 C1075,545 1077,570 1074,588 C1072,600 1068,607 1065,612 L1082,612 C1090,598 1094,580 1093,560 C1090,545 1083,535 1075,530 Z"/>
 <path fill="#a24e9e" d="M1044,506 C1040,512 1034,518 1030,522 C1035,535 1040,545 1050,546 C1058,545 1063,540 1066,535 C1067,522 1070,508 1074,497 Z"/>
 <path fill="#f2b8ee" opacity="0.8" filter="url(#blur3)" clip-path="url(#cBody)" d="M985,600 C1010,625 1060,640 1120,645 C1060,650 1010,640 980,618 Z"/>
 <path fill="#fff" d="M1090,612 L1097,618 L1100,624 L1088,620 Z"/>
 <use href="#pBelt" fill="#6a2c60"/>
 <use href="#pHead" fill="url(#headG)"/>
 <path fill="#eeb4ea" opacity="0.75" filter="url(#blur3)" clip-path="url(#cHead)" d="M1020,415 C1050,395 1100,390 1140,395 C1100,402 1050,408 1022,428 Z"/>
 <path fill="#a44c9c" opacity="0.85" d="M1067,506 C1072,490 1080,472 1090,467 C1105,462 1120,468 1131,480 C1110,492 1085,503 1067,506 Z"/>
 <use href="#pEyeL" fill="url(#eyeL)"/>
 <use href="#pEyeR" fill="#ebe5b8"/>
 <use href="#pGlove" fill="url(#gloveG)"/>
 <path fill="#c8b068" opacity="0.55" filter="url(#blur3)" clip-path="url(#cGlove)" d="M1130,700 C1140,740 1180,760 1240,770 C1200,750 1160,730 1140,690 Z M1250,725 C1290,745 1330,750 1370,790 C1330,760 1290,755 1250,740 Z M1300,690 C1330,700 1360,712 1380,712 C1350,718 1320,708 1300,698 Z"/>
 <path fill="#f0e0a8" opacity="0.5" filter="url(#blur3)" clip-path="url(#cGlove)" d="M1150,650 C1165,640 1185,640 1195,660 C1180,655 1165,660 1150,680 Z"/>
</g>
<!-- ===== COLORED CHARACTER: outlines ===== -->
<g fill="none" stroke="#242424" stroke-linecap="round" stroke-linejoin="round" filter="url(#rough)">
 <path stroke-width="2.6" d="M1012,408 C990,382 960,352 940,322 C928,302 921,282 923,263 C925,250 940,249 952,258 C972,274 992,302 1005,330 C1017,355 1027,375 1036,389"/>
 <path stroke-width="2.6" d="M1085,382 C1079,350 1074,300 1075,255 C1076,225 1085,202 1101,201 C1120,201 1128,225 1129,260 C1130,300 1126,345 1122,376"/>
 <use href="#pPants" stroke-width="2.2"/>
 <path stroke-width="1.8" d="M951,905 C946,915 950,928 962,929 C975,929 985,922 983,905 M1033,884 C1030,893 1038,899 1047,898 C1054,897 1056,891 1054,885"/>
 <path stroke-width="1" stroke="#555" d="M960,740 C970,735 985,760 985,770 M990,700 C1000,720 1005,730 1000,740 L1060,735 M1045,780 C1050,800 1055,820 1070,840 M970,850 L990,860"/>
 <use href="#pBody" stroke-width="2.6"/>
 <path stroke-width="2.2" d="M995,525 C1000,540 1005,560 1010,586 C1016,592 1024,596 1031,598 M1019,522 C1027,532 1034,555 1033,580 L1031,598 M1068,526 C1076,548 1077,575 1065,612 M1075,530 C1090,545 1095,580 1082,612"/>
 <path stroke-width="2.2" d="M1010,588 C1040,604 1080,618 1125,626 L1150,630"/>
 <path stroke-width="2" d="M1044,506 C1040,512 1034,518 1030,522 M1074,497 C1070,508 1067,522 1066,535 M1036,544 C1045,548 1055,548 1062,538"/>
 <path stroke-width="1.2" stroke="#444" d="M939,614 C950,630 958,643 987,660 M954,688 C965,680 975,675 987,670"/>
 <use href="#pBelt" stroke-width="1.6"/>
 <path stroke-width="1.6" stroke="#3a1434" d="M1015,672 C1028,664 1045,666 1058,678 C1045,688 1028,688 1015,672 Z M1100,688 a14,14 0 1,0 -6,12 M1100,688 a8,8 0 1,0 -8,6 M1097,688 a3,3 0 1,0 -3,2"/>
 <path stroke-width="2.8" d="M1013,409 C1002,425 995,440 995.5,452 C995,468 1003,480 1011,486 C1022,494 1040,503 1059,506 C1080,504 1105,492 1128,480 C1150,468 1168,450 1172,428 C1172,405 1155,385 1122,373 M1084,381 C1065,380 1048,384 1036,389"/>
 <use href="#pEyeL" stroke-width="2.6"/>
 <use href="#pEyeR" stroke-width="2.6"/>
 <path stroke-width="2.4" d="M1067,506 C1072,490 1080,472 1090,467 C1105,462 1120,468 1131,480"/>
 <path stroke-width="1.8" d="M1089,472 L1092,494 M1108,469 L1111,489"/>
 <path stroke-width="1.2" stroke="#555" d="M1073,500 C1090,496 1110,488 1128,480"/>
 <use href="#pGlove" stroke-width="2.6"/>
 <path stroke-width="2.2" d="M1203,638 C1208,665 1198,705 1172,735 C1162,745 1150,752 1140,756"/>
 <path stroke-width="1.4" d="M1292,686 C1320,696 1345,705 1360,708 M1242,712 C1262,722 1280,732 1300,744 M1265,783 C1272,792 1278,800 1283,807 M1380,700 C1388,704 1395,712 1398,722"/>
 <path stroke-width="1" stroke="#555" d="M1230,700 C1250,705 1262,715 1270,725 M1150,690 C1155,700 1160,710 1170,720"/>
</g>
<g fill="none" stroke="#1e1e1e" stroke-linecap="round" stroke-width="2.8">
 <path d="M1040.1,474.3 L1040.1,474.0 L1040.2,473.8 L1040.4,473.5 L1040.6,473.3 L1040.9,473.1 L1041.2,473.0 L1041.6,472.9 L1042.0,472.9 L1042.4,473.0 L1042.8,473.1 L1043.2,473.4 L1043.5,473.7 L1043.9,474.1 L1044.1,474.6 L1044.3,475.1 L1044.3,475.7 L1044.3,476.3 L1044.2,476.9 L1043.9,477.5 L1043.6,478.0 L1043.1,478.5 L1042.5,479.0 L1041.9,479.3 L1041.1,479.5 L1040.4,479.6 L1039.6,479.6 L1038.8,479.4 L1038.0,479.1 L1037.2,478.6 L1036.6,478.0 L1036.0,477.3 L1035.6,476.5 L1035.3,475.6 L1035.1,474.6 L1035.1,473.6 L1035.3,472.6 L1035.7,471.6 L1036.2,470.6 L1037.0,469.8 L1037.8,469.1 L1038.8,468.5 L1039.9,468.1 L1041.1,467.9 L1042.3,467.8 L1043.5,468.0 L1044.7,468.4 L1045.8,469.0 L1046.9,469.8 L1047.8,470.8 L1048.5,471.9 L1049.1,473.2 L1049.4,474.5 L1049.5,476.0 L1049.3,477.4 L1048.9,478.8 L1048.3,480.2 L1047.4,481.4 L1046.4,482.5 L1045.1,483.4 L1043.7,484.1"/><path d="M1130.1,435.3 L1130.1,435.0 L1130.2,434.8 L1130.4,434.5 L1130.6,434.3 L1130.9,434.2 L1131.2,434.0 L1131.5,434.0 L1131.9,434.0 L1132.3,434.0 L1132.7,434.2 L1133.1,434.4 L1133.5,434.7 L1133.8,435.1 L1134.0,435.6 L1134.1,436.1 L1134.2,436.6 L1134.2,437.2 L1134.0,437.8 L1133.8,438.4 L1133.5,438.9 L1133.0,439.4 L1132.5,439.8 L1131.8,440.1 L1131.1,440.3 L1130.4,440.4 L1129.6,440.4 L1128.9,440.2 L1128.1,439.9 L1127.4,439.4 L1126.8,438.9 L1126.2,438.2 L1125.8,437.4 L1125.5,436.5 L1125.4,435.6 L1125.4,434.6 L1125.6,433.7 L1126.0,432.7 L1126.5,431.8 L1127.2,431.1 L1128.0,430.4 L1128.9,429.8 L1129.9,429.4 L1131.1,429.2 L1132.2,429.2 L1133.4,429.4 L1134.5,429.7 L1135.6,430.3 L1136.6,431.1 L1137.4,432.0 L1138.1,433.1 L1138.6,434.3 L1138.9,435.6 L1139.0,436.9 L1138.9,438.3 L1138.5,439.6 L1137.9,440.9 L1137.1,442.1 L1136.1,443.1 L1134.9,444.0 L1133.5,444.6"/>
 <circle cx="1041" cy="475" r="14.5" stroke-width="2.6"/><circle cx="1131" cy="436" r="13.5" stroke-width="2.6"/>
</g>
</g>
</svg>
<!-- ===== RIGHT PANEL ===== -->
<svg style="left:1633px;top:72px" width="287" height="31">
<path fill="none" stroke="#8e8e8e" stroke-width="1.6" d="M10,9 L4.5,15 L10,21 M16.5,9 L11,15 L16.5,21 M234,9 L239.5,15 L234,21 M270,9 L275.5,15 L270,21 M276.5,9 L282,15 L276.5,21"/>
<path fill="none" stroke="#8a8a8a" stroke-width="1" d="M28.5,5 V24 M31.5,5 V24 M34.5,5 V24"/>
</svg>
<div class="a" style="left:1633px;top:104px;width:5px;height:911px;background:#3f3f3f"></div>
<div class="a" style="left:1633px;top:104px;width:23px;height:911px;background:#3a3a3a"></div>
<div class="a" style="left:1656px;top:104px;width:264px;height:911px;background:#444"></div>
<!-- navigator header -->
<div class="a" style="left:1656px;top:104px;width:264px;height:24px;background:#383838"></div>
<div class="hb" style="left:1656px;top:104px;width:26px;height:24px"><i style="top:7px"></i><i style="top:11px"></i><i style="top:16px"></i></div>
<div class="a" style="left:1682px;top:106px;width:101px;height:30px;background:#4a4a4a"></div>
<div class="a" style="left:1784px;top:106px;width:44px;height:22px;background:#434343;border-left:1px solid #363636"></div>
<div class="a" style="left:1829px;top:106px;width:44px;height:22px;background:#434343;border-left:1px solid #363636"></div>
<div class="a" style="left:1874px;top:106px;width:40px;height:22px;background:#434343;border-left:1px solid #363636"></div>
<div class="a" style="left:1656px;top:128px;width:264px;height:8px;background:#4a4a4a"></div>
<svg style="left:0;top:0" width="1920" height="1015">
 <rect x="1694.8" y="116.8" width="15.5" height="13" rx="2.5" fill="none" stroke="#c6c6c6" stroke-width="1.6"/>
 <rect x="1698" y="113" width="16" height="13.5" rx="2.5" fill="#8c8c8c" stroke="#c6c6c6" stroke-width="1.6"/>
 <rect x="1796" y="111" width="15" height="17" fill="none" stroke="#6e6e6e" stroke-width="2"/>
 <path fill="#6e6e6e" d="M1799,126 L1809,116 V126 Z"/>
 <path fill="none" stroke="#6e6e6e" stroke-width="2" d="M1842,128 Q1842,114 1852,114 Q1862,114 1862,128 M1846,122 H1858"/>
 <circle cx="1895" cy="122" r="10" fill="none" stroke="#6e6e6e" stroke-width="2"/>
 <path fill="#6e6e6e" d="M1893.5,119 H1896.5 V128 H1893.5 Z"/><circle cx="1895" cy="115.5" r="1.8" fill="#6e6e6e"/>
</svg>
<div class="t" style="left:1726px;top:114px;font-size:14px;color:#d8d8d8">Navigat</div>
<div class="a" style="left:1766px;top:110px;width:16px;height:20px;background:linear-gradient(90deg,rgba(74,74,74,0),#4a4a4a)"></div>
<!-- navigator preview -->
<div class="a" style="left:1656px;top:136px;width:264px;height:132px;background:#2c2c2c"></div>
<div class="a" style="left:1689px;top:136px;width:1px;height:132px;background:#e01010"></div>
<div class="a" style="left:1896px;top:136px;width:1px;height:132px;background:#e01010"></div>
<div class="a" style="left:1700px;top:137px;width:175px;height:130px;background:#fff"></div>
<svg style="left:1700px;top:137px" width="175" height="130" viewBox="411 157 1074 805">
 <use href="#drawingG"/>
</svg>
<!-- navigator controls -->
<div class="a" style="left:1656px;top:268px;width:264px;height:69px;background:#474747"></div>
<div class="a" style="left:1661px;top:276px;width:99px;height:22px;background:linear-gradient(172deg,#5a5a5a 0,#5a5a5a 40%,#2a2a2a 41%);border:1px solid #6a6a6a"></div>
<div class="a" style="left:1661px;top:306px;width:99px;height:22px;background:#5a5a5a;border:1px solid #6a6a6a;overflow:hidden"><svg style="left:0;top:0" width="97" height="20"><path fill="#2a2a2a" d="M0,0 L22,20 H0 Z M50,20 C60,4 66,0 76,0 C86,0 92,6 97,20 Z"/></svg></div>
<div class="a" style="left:1710px;top:274px;width:6px;height:26px;background:#6e6e6e;border:1px solid #888"></div>
<div class="a" style="left:1707px;top:301px;width:6px;height:31px;background:#6e6e6e;border:1px solid #888"></div>
<div class="t" style="left:1663px;top:280px;font-size:17px;color:#f0f0f0">67.1</div>
<div class="t" style="left:1667px;top:310px;font-size:17px;color:#f0f0f0">0.0</div>
<div class="a" style="left:1858px;top:274px;width:1px;height:58px;background:#5a5a5a"></div>
<svg style="left:0;top:0" width="1920" height="1015">
 <g class="ic" stroke-width="1.5">
 <circle cx="1779" cy="287" r="10"/><path d="M1773,287 H1785"/>
 <circle cx="1809" cy="287" r="10"/><path d="M1803,287 H1815 M1809,281 V293"/>
 <circle cx="1839" cy="287" r="10"/>
 <path d="M1864.5,276.5 H1876 V286 H1884.5 V297.5 H1873 V288 H1864.5 Z"/><path d="M1868,280 L1881,294 M1868,280 V285 M1868,280 H1873 M1881,294 V289 M1881,294 H1876"/>
 <rect x="1895" y="279" width="17" height="17" rx="2"/><path d="M1898,282 L1909,293 M1898,282 H1903 M1898,282 V287 M1909,293 H1904 M1909,293 V288"/>
 <path d="M1773.1,311.2 A9,9 0 1,1 1776.9,325.5"/>
 <path d="M1815.9,311.2 A9,9 0 1,0 1812.1,325.5"/>
 <path d="M1845,310 A9,9 0 1,1 1833,310" />
 <path d="M1839,317 V308"/>
 <path d="M1862.5,309 L1870,316.5 L1862.5,324 Z"/>
 <path d="M1873.5,306 V328"/>
 <path d="M1894,316.5 H1913"/>
 <path d="M1898,327 L1904.5,320 L1911,327 Z"/>
 </g>
 <rect class="icf" x="1834" y="282" width="10" height="10" rx="1.5"/>
 <path class="icf" d="M1767,314 L1777,314 L1772,321 Z M1811,314 L1821,314 L1816,321 Z"/>
 <circle class="icf" cx="1839" cy="317" r="3"/>
 <circle class="icf" cx="1832" cy="311" r="1"/><circle class="icf" cx="1834.5" cy="308.5" r="1"/><circle class="icf" cx="1830.5" cy="314" r="1"/>
 <path class="icf" d="M1885,309 L1877,316.5 L1885,324 Z M1897,306 H1912 L1904.5,314 Z"/>
</svg>
<!-- layer property header -->
<div class="a" style="left:1656px;top:337px;width:264px;height:22px;background:#383838"></div>
<div class="a" style="left:1656px;top:334px;width:264px;height:3px;background:#333"></div>
<div class="hb" style="left:1656px;top:337px;width:26px;height:22px"><i style="top:6px"></i><i style="top:10px"></i><i style="top:15px"></i></div>
<div class="a" style="left:1683px;top:337px;width:138px;height:30px;background:#4a4a4a"></div>
<div class="a" style="left:1822px;top:337px;width:44px;height:22px;background:#434343;border-left:1px solid #363636"></div>
<div class="a" style="left:1867px;top:337px;width:43px;height:22px;background:#434343;border-left:1px solid #363636"></div>
<div class="a" style="left:1656px;top:359px;width:264px;height:8px;background:#4a4a4a"></div>
<svg style="left:0;top:0" width="1920" height="1015">
 <path class="ic" stroke-width="1.6" d="M1696,347 L1705,342 L1714,347 L1705,352 Z M1696,351 L1705,356 L1712,352 M1696,355 L1705,360 L1710,357"/>
 <circle class="icf" cx="1713" cy="355" r="2"/><rect class="icf" x="1711" y="360" width="4" height="4"/>
 <path fill="none" stroke="#6e6e6e" stroke-width="2" d="M1836,352 L1846,346 L1856,352 M1836,356 L1846,362"/><path fill="#6e6e6e" d="M1850,356 H1858 L1854,361 Z"/>
 <path fill="#6e6e6e" d="M1880,358 L1886,346 Q1892,340 1898,346 Q1902,352 1896,358 Z"/>
</svg>
<div class="t" style="left:1726px;top:345px;font-size:14px;color:#d8d8d8">Layer Property</div>
<!-- layer property body -->
<div class="a" style="left:1656px;top:367px;width:264px;height:197px;background:#444"></div>
<div class="a" style="left:1897px;top:367px;width:13px;height:197px;background:#474747"></div>
<div class="a" style="left:1661px;top:380px;width:7px;height:1px;background:#6a6a6a"></div>
<div class="a" style="left:1716px;top:380px;width:180px;height:1px;background:#6a6a6a"></div>
<div class="t" style="left:1669px;top:374px;font-size:17.6px;color:#e8e8e8">Effect</div>
<div class="a" style="left:1752px;top:391px;width:145px;height:30px;background:#545454;border:1px solid #666;border-radius:2px"></div>
<svg style="left:0;top:0" width="1920" height="1015">
 <circle class="ic" stroke-width="1.6" cx="1767" cy="405.5" r="10"/>
 <circle cx="1797.5" cy="409" r="8.5" fill="#777"/>
 <circle cx="1801" cy="403.5" r="9" fill="#555" stroke="#c6c6c6" stroke-width="1.6"/>
 <path fill="#b8b8b8" d="M1794,400 Q1798,396 1801,397 Q1807,402 1806,409 Q1800,410 1796,406 Z"/>
 <g fill="#c6c6c6">
 <circle cx="1822" cy="398" r="1.8"/><circle cx="1829.5" cy="398" r="1.8"/><circle cx="1837" cy="398" r="1.8"/>
 <circle cx="1825.5" cy="401.8" r="1.8"/><circle cx="1833" cy="401.8" r="1.8"/>
 <circle cx="1822" cy="405.6" r="1.8"/><circle cx="1829.5" cy="405.6" r="1.8"/><circle cx="1837" cy="405.6" r="1.8"/>
 <circle cx="1825.5" cy="409.4" r="1.8"/><circle cx="1833" cy="409.4" r="1.8"/>
 <circle cx="1822" cy="413" r="1.8"/><circle cx="1829.5" cy="413" r="1.8"/><circle cx="1837" cy="413" r="1.8"/>
 </g>
 <rect x="1855.5" y="400.5" width="15.5" height="15.5" rx="3" fill="none" stroke="#c6c6c6" stroke-width="1.6"/>
 <rect x="1850.5" y="395.5" width="15.5" height="15.5" rx="3" fill="#8a8a8a" stroke="#c6c6c6" stroke-width="1.6"/>
 <path class="ic" stroke-width="1.6" d="M1878,402 L1884.5,408.5 L1891,402"/>
</svg>
<div class="a" style="left:1659px;top:436px;width:7px;height:1px;background:#6a6a6a"></div>
<div class="a" style="left:1803px;top:436px;width:93px;height:1px;background:#6a6a6a"></div>
<div class="t" style="left:1669px;top:430px;font-size:17.7px;color:#e8e8e8">Expression color</div>
<div class="a" style="left:1681px;top:452px;width:139px;height:30px;background:#545454;border:1px solid #666;border-radius:2px"></div>
<svg style="left:0;top:0" width="1920" height="1015">
 <circle cx="1716" cy="462" r="6" fill="#e04848"/>
 <circle cx="1711" cy="470" r="6" fill="#48c048"/>
 <circle cx="1722" cy="470" r="6" fill="#4898e0"/>
 <path fill="#f0f0f0" d="M1714,466 L1718,466 L1716,469 Z"/>
 <path class="ic" stroke-width="1.6" d="M1801,464 L1807,470 L1813,464"/>
</svg>
<div class="t" style="left:1735px;top:459px;font-size:17px;color:#e8e8e8">Color</div>
<!-- layer header -->
<div class="a" style="left:1656px;top:564px;width:264px;height:4px;background:#333"></div>
<div class="a" style="left:1656px;top:568px;width:264px;height:22px;background:#383838"></div>
<div class="hb" style="left:1656px;top:568px;width:26px;height:22px"><i style="top:6px"></i><i style="top:10px"></i><i style="top:15px"></i></div>
<div class="a" style="left:1683px;top:568px;width:81px;height:28px;background:#4a4a4a"></div>
<div class="a" style="left:1765px;top:568px;width:44px;height:22px;background:#434343;border-left:1px solid #363636"></div>
<div class="a" style="left:1810px;top:568px;width:43px;height:22px;background:#434343;border-left:1px solid #363636"></div>
<svg style="left:0;top:0" width="1920" height="1015">
 <path class="ic" stroke-width="1.6" d="M1696,577 L1705,572 L1714,577 L1705,582 Z M1696,581 L1705,586 L1714,581 M1696,585 L1705,590 L1714,585"/>
 <path fill="none" stroke="#6e6e6e" stroke-width="2" d="M1782,576 H1793 Q1798,576 1798,581 Q1798,586 1793,586 H1780 M1785,572 L1781,576 L1785,580"/>
 <path fill="none" stroke="#6e6e6e" stroke-width="2" d="M1825,578 H1843 V590 H1825 Z M1825,578 L1841,572"/>
</svg>
<div class="t" style="left:1726px;top:576px;font-size:14px;color:#d8d8d8">Layer</div>
<!-- layer controls -->
<div class="a" style="left:1656px;top:590px;width:264px;height:106px;background:#4a4a4a"></div>
<div class="a" style="left:1658px;top:598px;width:58px;height:30px;background:#545454;border:1px solid #6a6a6a;border-radius:2px"></div>
<div class="a" style="left:1721px;top:598px;width:66px;height:30px;background:#5c5c5c;border:1px solid #6a6a6a;border-radius:2px"></div>
<div class="a" style="left:1796px;top:606px;width:60px;height:13px;background-color:#fff;background-image:linear-gradient(45deg,#9a9a9a 25%,transparent 25%,transparent 75%,#9a9a9a 75%),linear-gradient(45deg,#9a9a9a 25%,transparent 25%,transparent 75%,#9a9a9a 75%);background-size:8px 8px;background-position:0 0,4px 4px;opacity:.85"></div>
<div class="a" style="left:1856px;top:598px;width:5px;height:30px;background:#6e6e6e;border:1px solid #888"></div>
<div class="t" style="left:1868px;top:605px;font-size:17px;color:#ececec">100</div>
<svg style="left:0;top:0" width="1920" height="1015">
 <g class="ic" stroke-width="1.5">
 <rect x="1664.5" y="603.5" width="22" height="20" rx="2"/>
 <path d="M1698,609 L1704,615 L1710,609"/>
 <path d="M1769,609 L1775,615 L1781,609"/>
 <path d="M1902,609 L1907,604 L1912,609 M1902,617 L1907,622 L1912,617"/>
 </g>
</svg>
<div class="t" style="left:1725px;top:605px;font-size:16px;color:#e0e0e0">Norm</div>
<div class="a" style="left:1758px;top:602px;width:10px;height:22px;background:linear-gradient(90deg,rgba(92,92,92,0),#5c5c5c)"></div>
<!-- layer icons row 2 -->
<div class="a" style="left:1669px;top:630px;width:30px;height:30px;background:#5f6b87"></div>
<div class="a" style="left:1820px;top:632px;width:45px;height:28px;background:#474747"></div>
<div class="a" style="left:1867px;top:632px;width:47px;height:28px;background:#474747"></div>
<svg style="left:0;top:0" width="1920" height="1015">
 <rect x="1676.5" y="635" width="17" height="17" rx="3" fill="none" stroke="#c6c6c6" stroke-width="1.6" stroke-dasharray="2.5,2"/>
 <path fill="#d0d0d0" d="M1676,640 H1686 Q1690,640 1690,644 V653 H1678 Q1676,653 1676,651 Z"/>
 <path fill="none" stroke="#8a94a8" stroke-width="1.5" d="M1674,640 V656 H1690"/>
 <g class="icf">
 <path d="M1711,636 H1719 V640 H1711 Z M1712,641 H1718 L1720,656 H1710 Z"/>
 </g>
 <path class="ic" stroke-width="1.4" d="M1703,640 H1727 M1705,634 L1711,638 M1725,634 L1719,638 M1705,646 L1711,642 M1725,646 L1719,642"/>
 <path fill="none" stroke="#777" stroke-width="1.6" d="M1735,635 L1745,635 L1743,648 Q1740,652 1737,648 Z M1745,650 Q1750,656 1755,652"/>
 <path class="icf" d="M1766,643 H1780 V655 H1766 Z"/>
 <path class="ic" stroke-width="2" d="M1769,643 V639 Q1769,635 1773,635 Q1777,635 1777,639 V643"/>
 <path class="icf" d="M1796,646 H1805 V655 H1796 Z M1806,634 H1811 V639 H1806 Z M1801,639 H1806 V644 H1801 Z M1811,639 H1816 V644 H1811 Z M1806,644 H1811 V649 H1806 Z M1811,649 H1816 V654 H1811 Z"/>
 <path class="ic" stroke-width="1.6" d="M1798,646 V643 Q1798,640 1800.5,640 Q1803,640 1803,643 V646"/>
 <rect x="1827" y="636" width="18" height="18" rx="4" fill="#5c5c5c"/><circle cx="1836" cy="645" r="5" fill="#474747"/><path fill="none" stroke="#5c5c5c" stroke-width="2" d="M1840,648 L1848,656 M1848,648 L1840,656 M1850,640 L1855,645 L1860,640"/>
 <path fill="#5a5a5a" d="M1878,637 H1895 L1878,653 Z"/><path fill="none" stroke="#5a5a5a" stroke-width="2" d="M1891,648 L1899,656 M1899,648 L1891,656 M1902,640 L1907,645 L1912,640"/>
</svg>
<!-- layer icons row 3 -->
<svg style="left:0;top:0" width="1920" height="1015">
 <g class="ic" stroke-width="1.5">
 <path d="M1697,688 H1686 Q1684,688 1684,686 V670 Q1684,668 1686,668 H1702 Q1704,668 1704,670 V680 M1684,681 L1691,688"/>
 <path d="M1727,688 H1716 Q1714,688 1714,686 V670 Q1714,668 1716,668 H1732 Q1734,668 1734,670 V680 M1714,681 L1721,688"/>
 <path d="M1719,676 L1724,673 L1729,676 V681 L1724,684 L1719,681 Z M1719,676 L1724,679 L1729,676 M1724,679 V684"/>
 <path d="M1784,675 H1774 Q1772,675 1772,677 V687 Q1772,689 1774,689 H1784 Q1786,689 1786,687 V684 M1782,666.5 H1793 Q1795,666.5 1795,668.5 V678 Q1795,680 1793,680 H1786 M1782,666.5 Q1780,666.5 1780,668.5 V672"/>
 <path d="M1787,680 Q1787,686 1780,686 M1782,683.5 L1779.5,686 L1782,688.5"/>
 <path d="M1814,675 H1804 Q1802,675 1802,677 V687 Q1802,689 1804,689 H1814 Q1816,689 1816,687 V684 M1811,666.5 H1823 Q1825,666.5 1825,668.5 V678 Q1825,680 1823,680 H1816"/>
 <path d="M1815,672 L1806,683 M1806,677 V683 H1812"/>
 <path d="M1895,671 H1911 M1900,671 V668 H1906 V671 M1897,672 L1898,688 H1908 L1909,672 M1901,675 V685 M1905,675 V685"/>
 </g>
 <circle cx="1701.5" cy="685.5" r="5" fill="#4a4a4a" stroke="#c6c6c6" stroke-width="1.5"/><path class="ic" stroke-width="1.5" d="M1698.5,685.5 H1704.5 M1701.5,682.5 V688.5"/>
 <circle cx="1731.5" cy="685.5" r="5" fill="#4a4a4a" stroke="#c6c6c6" stroke-width="1.5"/><path class="ic" stroke-width="1.5" d="M1728.5,685.5 H1734.5 M1731.5,682.5 V688.5"/>
 <path class="icf" d="M1742,669 H1750 L1753,672 H1762 V686 H1742 Z"/>
 <circle cx="1761" cy="685.5" r="5" fill="#4a4a4a" stroke="#c6c6c6" stroke-width="1.5"/><path class="ic" stroke-width="1.5" d="M1758,685.5 H1764 M1761,682.5 V688.5"/>
 <rect class="icf" x="1785" y="670" width="6" height="6"/>
 <rect x="1833" y="667" width="21" height="21" rx="3" fill="#c6c6c6"/><circle cx="1843.5" cy="677.5" r="5.5" fill="#474747"/>
 <path fill="none" stroke="#666" stroke-width="1.6" d="M1863,668 H1874 V686 H1863 Z"/><rect x="1869" y="674" width="17" height="14" rx="2" fill="#666"/><circle cx="1877.5" cy="681" r="3" fill="#4a4a4a"/>
</svg>
<!-- layer list -->
<div class="a" style="left:1656px;top:696px;width:264px;height:319px;background:#3e3e3e"></div>
<div class="a" style="left:1900px;top:696px;width:20px;height:319px;background:#474747"></div>
<div class="a" style="left:1656px;top:696px;width:244px;height:2px;background:#2a2a2a"></div>
<div class="a" style="left:1686px;top:696px;width:2px;height:51px;background:#2a2a2a"></div>
<div class="a" style="left:1714px;top:696px;width:2px;height:51px;background:#2a2a2a"></div>
<svg style="left:0;top:0" width="1920" height="1015"><path fill="none" stroke="#c6c6c6" stroke-width="1.8" d="M1661,723 Q1671,711 1681,723"/><circle cx="1671" cy="721" r="4.5" fill="#c6c6c6"/></svg>
<div class="a" style="left:1693px;top:713px;width:16px;height:16px;border:2px solid #2e2e2e;border-radius:2px"></div>
<div class="a" style="left:1726px;top:709px;width:34px;height:26px;background:#1c1c1c"></div>
<div class="a" style="left:1727px;top:710px;width:32px;height:24px;background-color:#fff;background-image:linear-gradient(45deg,#c8c8c8 25%,transparent 25%,transparent 75%,#c8c8c8 75%),linear-gradient(45deg,#c8c8c8 25%,transparent 25%,transparent 75%,#c8c8c8 75%);background-size:10px 10px;background-position:0 0,5px 5px"></div>
<div class="t" style="left:1774px;top:705px;font-size:17px;color:#e8e8e8">100 %<span style="margin-left:3px">Normal</span></div>
<div class="t" style="left:1774px;top:725px;font-size:17px;color:#e8e8e8">Layer 1</div>
<div class="a" style="left:1656px;top:748px;width:244px;height:2px;background:#2a2a2a"></div>
<div class="a" style="left:1686px;top:748px;width:2px;height:51px;background:#2a2a2a"></div>
<div class="a" style="left:1714px;top:748px;width:2px;height:51px;background:#2a2a2a"></div>
<svg style="left:0;top:0" width="1920" height="1015"><path fill="none" stroke="#c6c6c6" stroke-width="1.8" d="M1661,775 Q1671,763 1681,775"/><circle cx="1671" cy="773" r="4.5" fill="#c6c6c6"/></svg>
<div class="a" style="left:1693px;top:765px;width:16px;height:16px;border:2px solid #2e2e2e;border-radius:2px"></div>
<div class="a" style="left:1726px;top:761px;width:34px;height:26px;background:#1c1c1c"></div>
<div class="a" style="left:1727px;top:762px;width:32px;height:24px;background-color:#fff;background-image:linear-gradient(45deg,#c8c8c8 25%,transparent 25%,transparent 75%,#c8c8c8 75%),linear-gradient(45deg,#c8c8c8 25%,transparent 25%,transparent 75%,#c8c8c8 75%);background-size:10px 10px;background-position:0 0,5px 5px"></div>
<div class="t" style="left:1774px;top:757px;font-size:17px;color:#e8e8e8">100 %<span style="margin-left:3px">Normal</span></div>
<div class="t" style="left:1774px;top:777px;font-size:17px;color:#e8e8e8">Layer 5</div>
<div class="a" style="left:1656px;top:799px;width:244px;height:2px;background:#2a2a2a"></div>
<div class="a" style="left:1686px;top:799px;width:2px;height:51px;background:#2a2a2a"></div>
<div class="a" style="left:1714px;top:799px;width:2px;height:51px;background:#2a2a2a"></div>
<svg style="left:0;top:0" width="1920" height="1015"><path fill="none" stroke="#c6c6c6" stroke-width="1.8" d="M1661,826 Q1671,814 1681,826"/><circle cx="1671" cy="824" r="4.5" fill="#c6c6c6"/></svg>
<div class="a" style="left:1693px;top:816px;width:16px;height:16px;border:2px solid #2e2e2e;border-radius:2px"></div>
<div class="a" style="left:1719px;top:803px;width:6px;height:42px;background:#e27878;border-radius:2px"></div>
<div class="a" style="left:1732px;top:812px;width:34px;height:26px;background:#1c1c1c"></div>
<div class="a" style="left:1733px;top:813px;width:32px;height:24px;background-color:#fff;background-image:linear-gradient(45deg,#c8c8c8 25%,transparent 25%,transparent 75%,#c8c8c8 75%),linear-gradient(45deg,#c8c8c8 25%,transparent 25%,transparent 75%,#c8c8c8 75%);background-size:10px 10px;background-position:0 0,5px 5px"></div>
<div class="t" style="left:1780px;top:808px;font-size:17px;color:#e8e8e8">100 %<span style="margin-left:3px">Normal</span></div>
<div class="t" style="left:1780px;top:828px;font-size:17px;color:#e8e8e8">Layer 4</div>
<div class="a" style="left:1656px;top:850px;width:244px;height:2px;background:#2a2a2a"></div>
<div class="a" style="left:1717px;top:852px;width:183px;height:49px;background:#5f6b87"></div>
<div class="a" style="left:1686px;top:850px;width:2px;height:51px;background:#2a2a2a"></div>
<div class="a" style="left:1714px;top:850px;width:2px;height:51px;background:#2a2a2a"></div>
<svg style="left:0;top:0" width="1920" height="1015"><path fill="none" stroke="#c6c6c6" stroke-width="1.8" d="M1661,877 Q1671,865 1681,877"/><circle cx="1671" cy="875" r="4.5" fill="#c6c6c6"/></svg>
<svg style="left:0;top:0" width="1920" height="1015"><path fill="#c6c6c6" d="M1705,865 L1708,868 L1696,880 L1692,881 L1693,877 Z"/><path stroke="#c6c6c6" stroke-width="1.5" d="M1689,884 H1709"/></svg>
<div class="a" style="left:1719px;top:854px;width:6px;height:42px;background:#e27878;border-radius:2px"></div>
<div class="a" style="left:1729px;top:859px;width:41px;height:33px;border:2px solid #e8e8e8;background:#1c1c1c"></div>
<div class="a" style="left:1732px;top:862px;width:35px;height:27px;background:#1c1c1c"></div>
<div class="a" style="left:1733px;top:863px;width:33px;height:25px;background-color:#fff;background-image:linear-gradient(45deg,#c8c8c8 25%,transparent 25%,transparent 75%,#c8c8c8 75%),linear-gradient(45deg,#c8c8c8 25%,transparent 25%,transparent 75%,#c8c8c8 75%);background-size:10px 10px;background-position:0 0,5px 5px"></div>
<div class="a" style="left:1747px;top:870px;width:4px;height:14px;background:#c050b8"></div><div class="a" style="left:1753px;top:877px;width:10px;height:8px;border-radius:50%;background:#d8c070"></div>
<div class="t" style="left:1780px;top:859px;font-size:17px;color:#e8e8e8">100 %<span style="margin-left:3px">Normal</span></div>
<div class="t" style="left:1780px;top:879px;font-size:17px;color:#e8e8e8">Layer 3</div>
<div class="a" style="left:1656px;top:901px;width:244px;height:2px;background:#2a2a2a"></div>
<div class="a" style="left:1686px;top:901px;width:2px;height:51px;background:#2a2a2a"></div>
<div class="a" style="left:1714px;top:901px;width:2px;height:51px;background:#2a2a2a"></div>
<svg style="left:0;top:0" width="1920" height="1015"><path fill="none" stroke="#c6c6c6" stroke-width="1.8" d="M1661,928 Q1671,916 1681,928"/><circle cx="1671" cy="926" r="4.5" fill="#c6c6c6"/></svg>
<div class="a" style="left:1693px;top:918px;width:16px;height:16px;border:2px solid #2e2e2e;border-radius:2px"></div>
<div class="a" style="left:1726px;top:914px;width:34px;height:26px;background:#1c1c1c"></div>
<div class="a" style="left:1727px;top:915px;width:32px;height:24px;background-color:#fff;background-image:linear-gradient(45deg,#c8c8c8 25%,transparent 25%,transparent 75%,#c8c8c8 75%),linear-gradient(45deg,#c8c8c8 25%,transparent 25%,transparent 75%,#c8c8c8 75%);background-size:10px 10px;background-position:0 0,5px 5px"></div>
<div class="a" style="left:1737px;top:918px;width:5px;height:19px;background:#e070d8"></div><div class="a" style="left:1743px;top:927px;width:14px;height:9px;border-radius:40%;background:#d8c070"></div>
<div class="t" style="left:1774px;top:910px;font-size:17px;color:#e8e8e8">100 %<span style="margin-left:3px">Normal</span></div>
<div class="t" style="left:1774px;top:930px;font-size:17px;color:#e8e8e8">Layer 2</div>
<div class="a" style="left:1656px;top:952px;width:244px;height:2px;background:#2a2a2a"></div>
<div class="a" style="left:1686px;top:952px;width:2px;height:51px;background:#2a2a2a"></div>
<div class="a" style="left:1714px;top:952px;width:2px;height:51px;background:#2a2a2a"></div>
<svg style="left:0;top:0" width="1920" height="1015"><path fill="none" stroke="#c6c6c6" stroke-width="1.8" d="M1661,979 Q1671,967 1681,979"/><circle cx="1671" cy="977" r="4.5" fill="#c6c6c6"/></svg>
<div class="a" style="left:1693px;top:969px;width:16px;height:16px;border:2px solid #2e2e2e;border-radius:2px"></div>
<div class="a" style="left:1726px;top:965px;width:35px;height:25px;background:#fff;border:2px solid #1c1c1c"></div>
<div class="a" style="left:1780px;top:958px;width:25px;height:25px;background:#fff"></div>
<svg style="left:0;top:0" width="1920" height="1015"><path fill="none" stroke="#333" stroke-width="1.6" d="M1786,962 H1797 V979 H1790 L1786,975 Z"/></svg>
<div class="t" style="left:1810px;top:980px;font-size:17px;color:#e8e8e8">Paper</div>
<div class="a" style="left:1656px;top:1003px;width:244px;height:2px;background:#2a2a2a"></div>


</body></html>
